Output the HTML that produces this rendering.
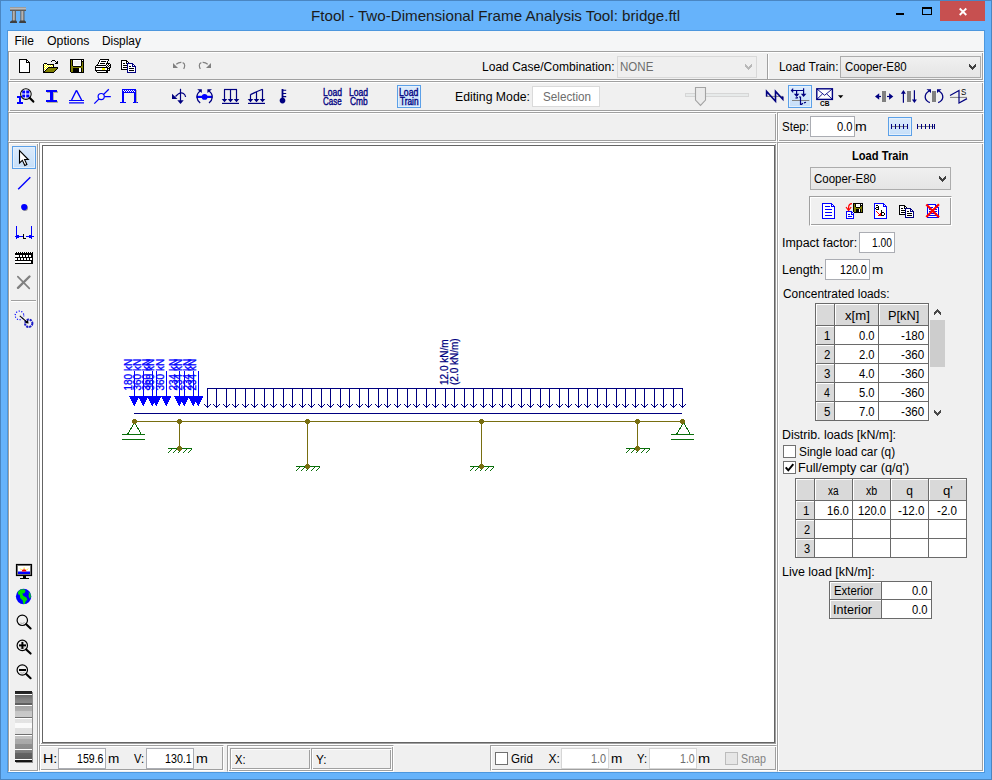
<!DOCTYPE html><html><head><meta charset="utf-8"><title>Ftool</title><style>
html,body{margin:0;padding:0}
body{width:992px;height:780px;overflow:hidden;position:relative;background:#66B3FB;font-family:"Liberation Sans",sans-serif;font-size:12px}
div,svg{position:absolute}
svg{overflow:visible}
.t{white-space:nowrap;line-height:1;padding-bottom:0;height:auto}
.px{shape-rendering:crispEdges}
</style></head><body>
<div style="left:0px;top:0px;width:992px;height:780px;background:#66B3FB;border:1px solid #4A86C2;box-sizing:border-box;"></div>
<div style="left:7px;top:30px;width:978px;height:743px;background:#4C97DE;"></div>
<div style="left:8px;top:31px;width:976px;height:741px;background:#F0F0F0;"></div>
<div style="left:940px;top:1px;width:45px;height:20px;background:#C75050;"></div>
<svg style="left:959px;top:8px" width="9" height="8" viewBox="0 0 9 8" ><path d="M0.7,0.5 L7.3,7 M7.3,0.5 L0.7,7" stroke="#fff" stroke-width="1.8" fill="none"/></svg>
<div style="left:896px;top:13px;width:8px;height:2px;background:#000;"></div>
<div style="left:922px;top:7px;width:10px;height:8px;border:1px solid #000;box-sizing:border-box;border-top-width:2px;"></div>
<div style="left:8px;top:31px;width:976px;height:20px;background:#F5F6F7;"></div>
<div style="left:8px;top:51px;width:976px;height:30px;box-sizing:border-box;border:1px solid;border-color:#A0A0A0 #FFFFFF #FFFFFF #A0A0A0;box-shadow:inset 1px 1px 0 #FFFFFF,inset -1px -1px 0 #A0A0A0;"></div>
<div style="left:8px;top:81px;width:976px;height:31px;box-sizing:border-box;border:1px solid;border-color:#A0A0A0 #FFFFFF #FFFFFF #A0A0A0;box-shadow:inset 1px 1px 0 #FFFFFF,inset -1px -1px 0 #A0A0A0;"></div>
<div style="left:8px;top:112px;width:769px;height:30px;box-sizing:border-box;border:1px solid;border-color:#A0A0A0 #FFFFFF #FFFFFF #A0A0A0;box-shadow:inset 1px 1px 0 #FFFFFF,inset -1px -1px 0 #A0A0A0;"></div>
<div style="left:777px;top:112px;width:207px;height:30px;box-sizing:border-box;border:1px solid;border-color:#A0A0A0 #FFFFFF #FFFFFF #A0A0A0;box-shadow:inset 1px 1px 0 #FFFFFF,inset -1px -1px 0 #A0A0A0;"></div>
<div style="left:8px;top:142px;width:31px;height:630px;box-sizing:border-box;border:1px solid;border-color:#A0A0A0 #FFFFFF #FFFFFF #A0A0A0;box-shadow:inset 1px 1px 0 #FFFFFF,inset -1px -1px 0 #A0A0A0;"></div>
<div style="left:39px;top:142px;width:738px;height:603px;box-sizing:border-box;border:1px solid;border-color:#A0A0A0 #FFFFFF #FFFFFF #A0A0A0;box-shadow:inset 1px 1px 0 #FFFFFF,inset -1px -1px 0 #A0A0A0;"></div>
<div style="left:41px;top:143px;width:734px;height:600px;background:#fff;"></div>
<div style="left:40px;top:143px;width:735px;height:600px;background:#fff;"></div>
<div style="left:42px;top:145px;width:733px;height:598px;background:#fff;border:1px solid #646464;box-sizing:border-box;"></div>
<div style="left:777px;top:142px;width:207px;height:630px;box-sizing:border-box;border:1px solid;border-color:#A0A0A0 #FFFFFF #FFFFFF #A0A0A0;box-shadow:inset 1px 1px 0 #FFFFFF,inset -1px -1px 0 #A0A0A0;"></div>
<div style="left:39px;top:745px;width:185px;height:26px;box-sizing:border-box;border:1px solid;border-color:#A0A0A0 #FFFFFF #FFFFFF #A0A0A0;box-shadow:inset 1px 1px 0 #FFFFFF,inset -1px -1px 0 #A0A0A0;"></div>
<div style="left:227px;top:745px;width:167px;height:27px;box-sizing:border-box;border:1px solid;border-color:#A0A0A0 #FFFFFF #FFFFFF #A0A0A0;box-shadow:inset 1px 1px 0 #FFFFFF,inset -1px -1px 0 #A0A0A0;"></div>
<div style="left:490px;top:745px;width:287px;height:26px;box-sizing:border-box;border:1px solid;border-color:#A0A0A0 #FFFFFF #FFFFFF #A0A0A0;box-shadow:inset 1px 1px 0 #FFFFFF,inset -1px -1px 0 #A0A0A0;"></div>
<div style="left:617px;top:56px;width:140px;height:22px;background:#EFEFEF;border:1px solid #D9D9D9;box-sizing:border-box;"></div>
<svg style="left:0px;top:0px" width="1" height="1" viewBox="0 0 1 1" class="px"><rect x="745" y="64" width="1" height="3" fill="#B8B8B8"/><rect x="746" y="65" width="1" height="3" fill="#B8B8B8"/><rect x="747" y="66" width="1" height="3" fill="#B8B8B8"/><rect x="748" y="67" width="1" height="3" fill="#B8B8B8"/><rect x="749" y="66" width="1" height="3" fill="#B8B8B8"/><rect x="750" y="65" width="1" height="3" fill="#B8B8B8"/><rect x="751" y="64" width="1" height="3" fill="#B8B8B8"/></svg>
<div style="left:840px;top:56px;width:141px;height:22px;border:1px solid #ACACAC;box-sizing:border-box;background:linear-gradient(#F0F0F0,#E5E5E5);"></div>
<svg style="left:0px;top:0px" width="1" height="1" viewBox="0 0 1 1" class="px"><rect x="969" y="64" width="1" height="3" fill="#404040"/><rect x="970" y="65" width="1" height="3" fill="#404040"/><rect x="971" y="66" width="1" height="3" fill="#404040"/><rect x="972" y="67" width="1" height="3" fill="#404040"/><rect x="973" y="66" width="1" height="3" fill="#404040"/><rect x="974" y="65" width="1" height="3" fill="#404040"/><rect x="975" y="64" width="1" height="3" fill="#404040"/></svg>
<div style="left:767px;top:54px;width:1px;height:25px;background:#A0A0A0;"></div>
<div style="left:768px;top:54px;width:1px;height:25px;background:#FFFFFF;"></div>
<div style="left:532px;top:86px;width:68px;height:21px;background:#fff;border:1px solid #DADADA;box-sizing:border-box;"></div>
<div style="left:685px;top:93px;width:64px;height:4px;background:#E7EAEA;border:1px solid #D6D6D6;box-sizing:border-box;"></div>
<svg style="left:695px;top:87px" width="12" height="20" viewBox="0 0 12 20" ><path d="M0.5,0.5 H10.5 V13 L5.5,18.4 L0.5,13 Z" fill="#EBEBEB" stroke="#A3A3A3" stroke-width="1.1"/></svg>
<div style="left:810px;top:116px;width:45px;height:21px;background:#fff;border:1px solid #ABADB3;box-sizing:border-box;"></div>
<div style="left:810px;top:167px;width:141px;height:23px;border:1px solid #ACACAC;box-sizing:border-box;background:linear-gradient(#F0F0F0,#E5E5E5);"></div>
<svg style="left:0px;top:0px" width="1" height="1" viewBox="0 0 1 1" class="px"><rect x="939" y="176" width="1" height="3" fill="#404040"/><rect x="940" y="177" width="1" height="3" fill="#404040"/><rect x="941" y="178" width="1" height="3" fill="#404040"/><rect x="942" y="179" width="1" height="3" fill="#404040"/><rect x="943" y="178" width="1" height="3" fill="#404040"/><rect x="944" y="177" width="1" height="3" fill="#404040"/><rect x="945" y="176" width="1" height="3" fill="#404040"/></svg>
<div style="left:809px;top:196px;width:143px;height:30px;box-sizing:border-box;border:1px solid;border-color:#A0A0A0 #FFFFFF #FFFFFF #A0A0A0;box-shadow:inset 1px 1px 0 #FFFFFF,inset -1px -1px 0 #A0A0A0;"></div>
<div style="left:859px;top:232px;width:36px;height:21px;background:#fff;border:1px solid #ABADB3;box-sizing:border-box;"></div>
<div style="left:825px;top:259px;width:45px;height:21px;background:#fff;border:1px solid #ABADB3;box-sizing:border-box;"></div>
<div style="left:815px;top:303px;width:114px;height:118px;background:#fff;"></div>
<div style="left:816px;top:304px;width:18px;height:21px;background:#D9D9D9;box-shadow:inset 1px 1px 0 #fff;"></div>
<div style="left:835px;top:304px;width:43px;height:21px;background:#D9D9D9;box-shadow:inset 1px 1px 0 #fff;"></div>
<div style="left:879px;top:304px;width:49px;height:21px;background:#D9D9D9;box-shadow:inset 1px 1px 0 #fff;"></div>
<div style="left:816px;top:326px;width:18px;height:18px;background:#D9D9D9;box-shadow:inset 1px 1px 0 #fff;"></div>
<div style="left:816px;top:345px;width:18px;height:18px;background:#D9D9D9;box-shadow:inset 1px 1px 0 #fff;"></div>
<div style="left:816px;top:364px;width:18px;height:18px;background:#D9D9D9;box-shadow:inset 1px 1px 0 #fff;"></div>
<div style="left:816px;top:383px;width:18px;height:18px;background:#D9D9D9;box-shadow:inset 1px 1px 0 #fff;"></div>
<div style="left:816px;top:402px;width:18px;height:18px;background:#D9D9D9;box-shadow:inset 1px 1px 0 #fff;"></div>
<div style="left:815px;top:303px;width:1px;height:118px;background:#6A6A6A;"></div>
<div style="left:834px;top:303px;width:1px;height:118px;background:#6A6A6A;"></div>
<div style="left:878px;top:303px;width:1px;height:118px;background:#6A6A6A;"></div>
<div style="left:928px;top:303px;width:1px;height:118px;background:#6A6A6A;"></div>
<div style="left:815px;top:303px;width:114px;height:1px;background:#6A6A6A;"></div>
<div style="left:815px;top:325px;width:114px;height:1px;background:#6A6A6A;"></div>
<div style="left:815px;top:344px;width:114px;height:1px;background:#6A6A6A;"></div>
<div style="left:815px;top:363px;width:114px;height:1px;background:#6A6A6A;"></div>
<div style="left:815px;top:382px;width:114px;height:1px;background:#6A6A6A;"></div>
<div style="left:815px;top:401px;width:114px;height:1px;background:#6A6A6A;"></div>
<div style="left:815px;top:420px;width:114px;height:1px;background:#6A6A6A;"></div>
<div style="left:795px;top:478px;width:172px;height:80px;background:#fff;"></div>
<div style="left:796px;top:479px;width:18px;height:21px;background:#D9D9D9;box-shadow:inset 1px 1px 0 #fff;"></div>
<div style="left:815px;top:479px;width:37px;height:21px;background:#D9D9D9;box-shadow:inset 1px 1px 0 #fff;"></div>
<div style="left:853px;top:479px;width:37px;height:21px;background:#D9D9D9;box-shadow:inset 1px 1px 0 #fff;"></div>
<div style="left:891px;top:479px;width:37px;height:21px;background:#D9D9D9;box-shadow:inset 1px 1px 0 #fff;"></div>
<div style="left:929px;top:479px;width:37px;height:21px;background:#D9D9D9;box-shadow:inset 1px 1px 0 #fff;"></div>
<div style="left:796px;top:501px;width:18px;height:18px;background:#D9D9D9;box-shadow:inset 1px 1px 0 #fff;"></div>
<div style="left:796px;top:520px;width:18px;height:18px;background:#D9D9D9;box-shadow:inset 1px 1px 0 #fff;"></div>
<div style="left:796px;top:539px;width:18px;height:18px;background:#D9D9D9;box-shadow:inset 1px 1px 0 #fff;"></div>
<div style="left:795px;top:478px;width:1px;height:80px;background:#6A6A6A;"></div>
<div style="left:814px;top:478px;width:1px;height:80px;background:#6A6A6A;"></div>
<div style="left:852px;top:478px;width:1px;height:80px;background:#6A6A6A;"></div>
<div style="left:890px;top:478px;width:1px;height:80px;background:#6A6A6A;"></div>
<div style="left:928px;top:478px;width:1px;height:80px;background:#6A6A6A;"></div>
<div style="left:966px;top:478px;width:1px;height:80px;background:#6A6A6A;"></div>
<div style="left:795px;top:478px;width:172px;height:1px;background:#6A6A6A;"></div>
<div style="left:795px;top:500px;width:172px;height:1px;background:#6A6A6A;"></div>
<div style="left:795px;top:519px;width:172px;height:1px;background:#6A6A6A;"></div>
<div style="left:795px;top:538px;width:172px;height:1px;background:#6A6A6A;"></div>
<div style="left:795px;top:557px;width:172px;height:1px;background:#6A6A6A;"></div>
<div style="left:829px;top:581px;width:103px;height:38px;background:#fff;"></div>
<div style="left:830px;top:582px;width:51px;height:17px;background:#D9D9D9;box-shadow:inset 1px 1px 0 #fff;"></div>
<div style="left:830px;top:600px;width:51px;height:18px;background:#D9D9D9;box-shadow:inset 1px 1px 0 #fff;"></div>
<div style="left:829px;top:581px;width:1px;height:38px;background:#6A6A6A;"></div>
<div style="left:881px;top:581px;width:1px;height:38px;background:#6A6A6A;"></div>
<div style="left:931px;top:581px;width:1px;height:38px;background:#6A6A6A;"></div>
<div style="left:829px;top:581px;width:103px;height:1px;background:#6A6A6A;"></div>
<div style="left:829px;top:599px;width:103px;height:1px;background:#6A6A6A;"></div>
<div style="left:829px;top:618px;width:103px;height:1px;background:#6A6A6A;"></div>
<div style="left:930px;top:320px;width:15px;height:47px;background:#CDCDCD;"></div>
<div style="left:929px;top:304px;width:1px;height:117px;background:#FAFAFA;"></div>
<svg style="left:0px;top:0px" width="1" height="1" viewBox="0 0 1 1" class="px"><rect x="934" y="312" width="1" height="3" fill="#484848"/><rect x="935" y="311" width="1" height="3" fill="#484848"/><rect x="936" y="310" width="1" height="3" fill="#484848"/><rect x="937" y="309" width="1" height="3" fill="#484848"/><rect x="938" y="310" width="1" height="3" fill="#484848"/><rect x="939" y="311" width="1" height="3" fill="#484848"/><rect x="940" y="312" width="1" height="3" fill="#484848"/></svg>
<svg style="left:0px;top:0px" width="1" height="1" viewBox="0 0 1 1" class="px"><rect x="934" y="410" width="1" height="3" fill="#484848"/><rect x="935" y="411" width="1" height="3" fill="#484848"/><rect x="936" y="412" width="1" height="3" fill="#484848"/><rect x="937" y="413" width="1" height="3" fill="#484848"/><rect x="938" y="412" width="1" height="3" fill="#484848"/><rect x="939" y="411" width="1" height="3" fill="#484848"/><rect x="940" y="410" width="1" height="3" fill="#484848"/></svg>
<div style="left:783px;top:445px;width:13px;height:13px;background:#fff;border:1px solid #707070;box-sizing:border-box;"></div>
<div style="left:783px;top:461px;width:13px;height:13px;background:#fff;border:1px solid #707070;box-sizing:border-box;"></div>
<svg style="left:783px;top:461px" width="13" height="13" viewBox="0 0 13 13" ><path d="M2.7,6.3 L5.3,9.3 L10.3,3.2" stroke="#000" stroke-width="2" fill="none"/></svg>
<div style="left:495px;top:752px;width:13px;height:13px;background:#fff;border:1px solid #707070;box-sizing:border-box;"></div>
<div style="left:725px;top:752px;width:13px;height:13px;background:#E6E6E6;border:1px solid #BCBCBC;box-sizing:border-box;"></div>
<div style="left:58px;top:748px;width:48px;height:21px;background:#fff;border:1px solid #ABADB3;box-sizing:border-box;"></div>
<div style="left:146px;top:748px;width:48px;height:21px;background:#fff;border:1px solid #ABADB3;box-sizing:border-box;"></div>
<div style="left:230px;top:748px;width:81px;height:22px;box-sizing:border-box;border:1px solid;border-color:#A0A0A0 #FFFFFF #FFFFFF #A0A0A0;box-shadow:inset 1px 1px 0 #FFFFFF,inset -1px -1px 0 #A0A0A0;"></div>
<div style="left:311px;top:748px;width:81px;height:22px;box-sizing:border-box;border:1px solid;border-color:#A0A0A0 #FFFFFF #FFFFFF #A0A0A0;box-shadow:inset 1px 1px 0 #FFFFFF,inset -1px -1px 0 #A0A0A0;"></div>
<div style="left:561px;top:748px;width:48px;height:21px;background:#fff;border:1px solid #D6D6D6;box-sizing:border-box;"></div>
<div style="left:649px;top:748px;width:48px;height:21px;background:#fff;border:1px solid #D6D6D6;box-sizing:border-box;"></div>
<svg style="left:0px;top:0px" width="992" height="780" viewBox="0 0 992 780" ><g shape-rendering="crispEdges"><rect x="134" y="413" width="548" height="1" fill="#000080"/><rect x="134" y="421" width="549" height="1" fill="#786E10"/><rect x="179" y="421" width="1" height="28" fill="#786E10"/><rect x="307" y="421" width="1" height="46" fill="#786E10"/><rect x="481" y="421" width="1" height="46" fill="#786E10"/><rect x="637" y="421" width="1" height="28" fill="#786E10"/><rect x="168" y="448" width="24" height="1" fill="#0A6E0A"/><rect x="171" y="449" width="1" height="1" fill="#0A6E0A"/><rect x="170" y="450" width="1" height="1" fill="#0A6E0A"/><rect x="169" y="451" width="1" height="1" fill="#0A6E0A"/><rect x="168" y="452" width="1" height="1" fill="#0A6E0A"/><rect x="176" y="449" width="1" height="1" fill="#0A6E0A"/><rect x="175" y="450" width="1" height="1" fill="#0A6E0A"/><rect x="174" y="451" width="1" height="1" fill="#0A6E0A"/><rect x="173" y="452" width="1" height="1" fill="#0A6E0A"/><rect x="181" y="449" width="1" height="1" fill="#0A6E0A"/><rect x="180" y="450" width="1" height="1" fill="#0A6E0A"/><rect x="179" y="451" width="1" height="1" fill="#0A6E0A"/><rect x="178" y="452" width="1" height="1" fill="#0A6E0A"/><rect x="186" y="449" width="1" height="1" fill="#0A6E0A"/><rect x="185" y="450" width="1" height="1" fill="#0A6E0A"/><rect x="184" y="451" width="1" height="1" fill="#0A6E0A"/><rect x="183" y="452" width="1" height="1" fill="#0A6E0A"/><rect x="191" y="449" width="1" height="1" fill="#0A6E0A"/><rect x="190" y="450" width="1" height="1" fill="#0A6E0A"/><rect x="189" y="451" width="1" height="1" fill="#0A6E0A"/><rect x="188" y="452" width="1" height="1" fill="#0A6E0A"/><rect x="296" y="466" width="24" height="1" fill="#0A6E0A"/><rect x="299" y="467" width="1" height="1" fill="#0A6E0A"/><rect x="298" y="468" width="1" height="1" fill="#0A6E0A"/><rect x="297" y="469" width="1" height="1" fill="#0A6E0A"/><rect x="296" y="470" width="1" height="1" fill="#0A6E0A"/><rect x="304" y="467" width="1" height="1" fill="#0A6E0A"/><rect x="303" y="468" width="1" height="1" fill="#0A6E0A"/><rect x="302" y="469" width="1" height="1" fill="#0A6E0A"/><rect x="301" y="470" width="1" height="1" fill="#0A6E0A"/><rect x="309" y="467" width="1" height="1" fill="#0A6E0A"/><rect x="308" y="468" width="1" height="1" fill="#0A6E0A"/><rect x="307" y="469" width="1" height="1" fill="#0A6E0A"/><rect x="306" y="470" width="1" height="1" fill="#0A6E0A"/><rect x="314" y="467" width="1" height="1" fill="#0A6E0A"/><rect x="313" y="468" width="1" height="1" fill="#0A6E0A"/><rect x="312" y="469" width="1" height="1" fill="#0A6E0A"/><rect x="311" y="470" width="1" height="1" fill="#0A6E0A"/><rect x="319" y="467" width="1" height="1" fill="#0A6E0A"/><rect x="318" y="468" width="1" height="1" fill="#0A6E0A"/><rect x="317" y="469" width="1" height="1" fill="#0A6E0A"/><rect x="316" y="470" width="1" height="1" fill="#0A6E0A"/><rect x="470" y="466" width="24" height="1" fill="#0A6E0A"/><rect x="473" y="467" width="1" height="1" fill="#0A6E0A"/><rect x="472" y="468" width="1" height="1" fill="#0A6E0A"/><rect x="471" y="469" width="1" height="1" fill="#0A6E0A"/><rect x="470" y="470" width="1" height="1" fill="#0A6E0A"/><rect x="478" y="467" width="1" height="1" fill="#0A6E0A"/><rect x="477" y="468" width="1" height="1" fill="#0A6E0A"/><rect x="476" y="469" width="1" height="1" fill="#0A6E0A"/><rect x="475" y="470" width="1" height="1" fill="#0A6E0A"/><rect x="483" y="467" width="1" height="1" fill="#0A6E0A"/><rect x="482" y="468" width="1" height="1" fill="#0A6E0A"/><rect x="481" y="469" width="1" height="1" fill="#0A6E0A"/><rect x="480" y="470" width="1" height="1" fill="#0A6E0A"/><rect x="488" y="467" width="1" height="1" fill="#0A6E0A"/><rect x="487" y="468" width="1" height="1" fill="#0A6E0A"/><rect x="486" y="469" width="1" height="1" fill="#0A6E0A"/><rect x="485" y="470" width="1" height="1" fill="#0A6E0A"/><rect x="493" y="467" width="1" height="1" fill="#0A6E0A"/><rect x="492" y="468" width="1" height="1" fill="#0A6E0A"/><rect x="491" y="469" width="1" height="1" fill="#0A6E0A"/><rect x="490" y="470" width="1" height="1" fill="#0A6E0A"/><rect x="626" y="448" width="24" height="1" fill="#0A6E0A"/><rect x="629" y="449" width="1" height="1" fill="#0A6E0A"/><rect x="628" y="450" width="1" height="1" fill="#0A6E0A"/><rect x="627" y="451" width="1" height="1" fill="#0A6E0A"/><rect x="626" y="452" width="1" height="1" fill="#0A6E0A"/><rect x="634" y="449" width="1" height="1" fill="#0A6E0A"/><rect x="633" y="450" width="1" height="1" fill="#0A6E0A"/><rect x="632" y="451" width="1" height="1" fill="#0A6E0A"/><rect x="631" y="452" width="1" height="1" fill="#0A6E0A"/><rect x="639" y="449" width="1" height="1" fill="#0A6E0A"/><rect x="638" y="450" width="1" height="1" fill="#0A6E0A"/><rect x="637" y="451" width="1" height="1" fill="#0A6E0A"/><rect x="636" y="452" width="1" height="1" fill="#0A6E0A"/><rect x="644" y="449" width="1" height="1" fill="#0A6E0A"/><rect x="643" y="450" width="1" height="1" fill="#0A6E0A"/><rect x="642" y="451" width="1" height="1" fill="#0A6E0A"/><rect x="641" y="452" width="1" height="1" fill="#0A6E0A"/><rect x="649" y="449" width="1" height="1" fill="#0A6E0A"/><rect x="648" y="450" width="1" height="1" fill="#0A6E0A"/><rect x="647" y="451" width="1" height="1" fill="#0A6E0A"/><rect x="646" y="452" width="1" height="1" fill="#0A6E0A"/><path d="M134.5,422.5 L127.5,434.5 M134.5,422.5 L141.5,434.5" stroke="#0A6E0A" stroke-width="1" fill="none"/><rect x="122" y="434" width="23" height="1" fill="#0A6E0A"/><rect x="122" y="439" width="23" height="1" fill="#0A6E0A"/><path d="M683.5,422.5 L676.5,434.5 M683.5,422.5 L690.5,434.5" stroke="#0A6E0A" stroke-width="1" fill="none"/><rect x="671" y="434" width="23" height="1" fill="#0A6E0A"/><rect x="671" y="439" width="23" height="1" fill="#0A6E0A"/><circle cx="134.5" cy="421.5" r="2.5" fill="#786E10"/><circle cx="682.5" cy="421.5" r="2.5" fill="#786E10"/><circle cx="179.5" cy="421.5" r="2.5" fill="#786E10"/><circle cx="307.5" cy="421.5" r="2.5" fill="#786E10"/><circle cx="481.5" cy="421.5" r="2.5" fill="#786E10"/><circle cx="637.5" cy="421.5" r="2.5" fill="#786E10"/><circle cx="179.5" cy="448.5" r="2.5" fill="#786E10"/><circle cx="307.5" cy="466.5" r="2.5" fill="#786E10"/><circle cx="481.5" cy="466.5" r="2.5" fill="#786E10"/><circle cx="637.5" cy="448.5" r="2.5" fill="#786E10"/><rect x="207" y="388" width="476" height="1" fill="#000080"/><rect x="207" y="388" width="1" height="20" fill="#000080"/><path d="M204.5,404.5 L207.5,407.5 L210.5,404.5" stroke="#000080" stroke-width="1" fill="none"/><rect x="216" y="388" width="1" height="20" fill="#000080"/><path d="M213.5,404.5 L216.5,407.5 L219.5,404.5" stroke="#000080" stroke-width="1" fill="none"/><rect x="226" y="388" width="1" height="20" fill="#000080"/><path d="M223.5,404.5 L226.5,407.5 L229.5,404.5" stroke="#000080" stroke-width="1" fill="none"/><rect x="235" y="388" width="1" height="20" fill="#000080"/><path d="M232.5,404.5 L235.5,407.5 L238.5,404.5" stroke="#000080" stroke-width="1" fill="none"/><rect x="245" y="388" width="1" height="20" fill="#000080"/><path d="M242.5,404.5 L245.5,407.5 L248.5,404.5" stroke="#000080" stroke-width="1" fill="none"/><rect x="254" y="388" width="1" height="20" fill="#000080"/><path d="M251.5,404.5 L254.5,407.5 L257.5,404.5" stroke="#000080" stroke-width="1" fill="none"/><rect x="264" y="388" width="1" height="20" fill="#000080"/><path d="M261.5,404.5 L264.5,407.5 L267.5,404.5" stroke="#000080" stroke-width="1" fill="none"/><rect x="273" y="388" width="1" height="20" fill="#000080"/><path d="M270.5,404.5 L273.5,407.5 L276.5,404.5" stroke="#000080" stroke-width="1" fill="none"/><rect x="283" y="388" width="1" height="20" fill="#000080"/><path d="M280.5,404.5 L283.5,407.5 L286.5,404.5" stroke="#000080" stroke-width="1" fill="none"/><rect x="292" y="388" width="1" height="20" fill="#000080"/><path d="M289.5,404.5 L292.5,407.5 L295.5,404.5" stroke="#000080" stroke-width="1" fill="none"/><rect x="302" y="388" width="1" height="20" fill="#000080"/><path d="M299.5,404.5 L302.5,407.5 L305.5,404.5" stroke="#000080" stroke-width="1" fill="none"/><rect x="311" y="388" width="1" height="20" fill="#000080"/><path d="M308.5,404.5 L311.5,407.5 L314.5,404.5" stroke="#000080" stroke-width="1" fill="none"/><rect x="321" y="388" width="1" height="20" fill="#000080"/><path d="M318.5,404.5 L321.5,407.5 L324.5,404.5" stroke="#000080" stroke-width="1" fill="none"/><rect x="330" y="388" width="1" height="20" fill="#000080"/><path d="M327.5,404.5 L330.5,407.5 L333.5,404.5" stroke="#000080" stroke-width="1" fill="none"/><rect x="340" y="388" width="1" height="20" fill="#000080"/><path d="M337.5,404.5 L340.5,407.5 L343.5,404.5" stroke="#000080" stroke-width="1" fill="none"/><rect x="349" y="388" width="1" height="20" fill="#000080"/><path d="M346.5,404.5 L349.5,407.5 L352.5,404.5" stroke="#000080" stroke-width="1" fill="none"/><rect x="359" y="388" width="1" height="20" fill="#000080"/><path d="M356.5,404.5 L359.5,407.5 L362.5,404.5" stroke="#000080" stroke-width="1" fill="none"/><rect x="368" y="388" width="1" height="20" fill="#000080"/><path d="M365.5,404.5 L368.5,407.5 L371.5,404.5" stroke="#000080" stroke-width="1" fill="none"/><rect x="378" y="388" width="1" height="20" fill="#000080"/><path d="M375.5,404.5 L378.5,407.5 L381.5,404.5" stroke="#000080" stroke-width="1" fill="none"/><rect x="387" y="388" width="1" height="20" fill="#000080"/><path d="M384.5,404.5 L387.5,407.5 L390.5,404.5" stroke="#000080" stroke-width="1" fill="none"/><rect x="397" y="388" width="1" height="20" fill="#000080"/><path d="M394.5,404.5 L397.5,407.5 L400.5,404.5" stroke="#000080" stroke-width="1" fill="none"/><rect x="407" y="388" width="1" height="20" fill="#000080"/><path d="M404.5,404.5 L407.5,407.5 L410.5,404.5" stroke="#000080" stroke-width="1" fill="none"/><rect x="416" y="388" width="1" height="20" fill="#000080"/><path d="M413.5,404.5 L416.5,407.5 L419.5,404.5" stroke="#000080" stroke-width="1" fill="none"/><rect x="426" y="388" width="1" height="20" fill="#000080"/><path d="M423.5,404.5 L426.5,407.5 L429.5,404.5" stroke="#000080" stroke-width="1" fill="none"/><rect x="435" y="388" width="1" height="20" fill="#000080"/><path d="M432.5,404.5 L435.5,407.5 L438.5,404.5" stroke="#000080" stroke-width="1" fill="none"/><rect x="445" y="388" width="1" height="20" fill="#000080"/><path d="M442.5,404.5 L445.5,407.5 L448.5,404.5" stroke="#000080" stroke-width="1" fill="none"/><rect x="454" y="388" width="1" height="20" fill="#000080"/><path d="M451.5,404.5 L454.5,407.5 L457.5,404.5" stroke="#000080" stroke-width="1" fill="none"/><rect x="464" y="388" width="1" height="20" fill="#000080"/><path d="M461.5,404.5 L464.5,407.5 L467.5,404.5" stroke="#000080" stroke-width="1" fill="none"/><rect x="473" y="388" width="1" height="20" fill="#000080"/><path d="M470.5,404.5 L473.5,407.5 L476.5,404.5" stroke="#000080" stroke-width="1" fill="none"/><rect x="483" y="388" width="1" height="20" fill="#000080"/><path d="M480.5,404.5 L483.5,407.5 L486.5,404.5" stroke="#000080" stroke-width="1" fill="none"/><rect x="492" y="388" width="1" height="20" fill="#000080"/><path d="M489.5,404.5 L492.5,407.5 L495.5,404.5" stroke="#000080" stroke-width="1" fill="none"/><rect x="502" y="388" width="1" height="20" fill="#000080"/><path d="M499.5,404.5 L502.5,407.5 L505.5,404.5" stroke="#000080" stroke-width="1" fill="none"/><rect x="511" y="388" width="1" height="20" fill="#000080"/><path d="M508.5,404.5 L511.5,407.5 L514.5,404.5" stroke="#000080" stroke-width="1" fill="none"/><rect x="521" y="388" width="1" height="20" fill="#000080"/><path d="M518.5,404.5 L521.5,407.5 L524.5,404.5" stroke="#000080" stroke-width="1" fill="none"/><rect x="530" y="388" width="1" height="20" fill="#000080"/><path d="M527.5,404.5 L530.5,407.5 L533.5,404.5" stroke="#000080" stroke-width="1" fill="none"/><rect x="540" y="388" width="1" height="20" fill="#000080"/><path d="M537.5,404.5 L540.5,407.5 L543.5,404.5" stroke="#000080" stroke-width="1" fill="none"/><rect x="549" y="388" width="1" height="20" fill="#000080"/><path d="M546.5,404.5 L549.5,407.5 L552.5,404.5" stroke="#000080" stroke-width="1" fill="none"/><rect x="559" y="388" width="1" height="20" fill="#000080"/><path d="M556.5,404.5 L559.5,407.5 L562.5,404.5" stroke="#000080" stroke-width="1" fill="none"/><rect x="568" y="388" width="1" height="20" fill="#000080"/><path d="M565.5,404.5 L568.5,407.5 L571.5,404.5" stroke="#000080" stroke-width="1" fill="none"/><rect x="578" y="388" width="1" height="20" fill="#000080"/><path d="M575.5,404.5 L578.5,407.5 L581.5,404.5" stroke="#000080" stroke-width="1" fill="none"/><rect x="587" y="388" width="1" height="20" fill="#000080"/><path d="M584.5,404.5 L587.5,407.5 L590.5,404.5" stroke="#000080" stroke-width="1" fill="none"/><rect x="597" y="388" width="1" height="20" fill="#000080"/><path d="M594.5,404.5 L597.5,407.5 L600.5,404.5" stroke="#000080" stroke-width="1" fill="none"/><rect x="606" y="388" width="1" height="20" fill="#000080"/><path d="M603.5,404.5 L606.5,407.5 L609.5,404.5" stroke="#000080" stroke-width="1" fill="none"/><rect x="616" y="388" width="1" height="20" fill="#000080"/><path d="M613.5,404.5 L616.5,407.5 L619.5,404.5" stroke="#000080" stroke-width="1" fill="none"/><rect x="625" y="388" width="1" height="20" fill="#000080"/><path d="M622.5,404.5 L625.5,407.5 L628.5,404.5" stroke="#000080" stroke-width="1" fill="none"/><rect x="635" y="388" width="1" height="20" fill="#000080"/><path d="M632.5,404.5 L635.5,407.5 L638.5,404.5" stroke="#000080" stroke-width="1" fill="none"/><rect x="644" y="388" width="1" height="20" fill="#000080"/><path d="M641.5,404.5 L644.5,407.5 L647.5,404.5" stroke="#000080" stroke-width="1" fill="none"/><rect x="654" y="388" width="1" height="20" fill="#000080"/><path d="M651.5,404.5 L654.5,407.5 L657.5,404.5" stroke="#000080" stroke-width="1" fill="none"/><rect x="663" y="388" width="1" height="20" fill="#000080"/><path d="M660.5,404.5 L663.5,407.5 L666.5,404.5" stroke="#000080" stroke-width="1" fill="none"/><rect x="673" y="388" width="1" height="20" fill="#000080"/><path d="M670.5,404.5 L673.5,407.5 L676.5,404.5" stroke="#000080" stroke-width="1" fill="none"/><rect x="682" y="388" width="1" height="20" fill="#000080"/><path d="M679.5,404.5 L682.5,407.5 L685.5,404.5" stroke="#000080" stroke-width="1" fill="none"/><rect x="134" y="371" width="1" height="30" fill="#0000FF"/><path d="M129,396 H139.4 L134.3,406 Z" fill="#0000FF"/><rect x="143" y="371" width="1" height="30" fill="#0000FF"/><path d="M138,396 H148.4 L143.3,406 Z" fill="#0000FF"/><rect x="152" y="371" width="1" height="30" fill="#0000FF"/><path d="M147,396 H157.4 L152.3,406 Z" fill="#0000FF"/><rect x="156" y="371" width="1" height="30" fill="#0000FF"/><path d="M151,396 H161.4 L156.3,406 Z" fill="#0000FF"/><rect x="166" y="371" width="1" height="30" fill="#0000FF"/><path d="M161,396 H171.4 L166.3,406 Z" fill="#0000FF"/><rect x="179" y="371" width="1" height="30" fill="#0000FF"/><path d="M174,396 H184.4 L179.3,406 Z" fill="#0000FF"/><rect x="184" y="371" width="1" height="30" fill="#0000FF"/><path d="M179,396 H189.4 L184.3,406 Z" fill="#0000FF"/><rect x="193" y="371" width="1" height="30" fill="#0000FF"/><path d="M188,396 H198.4 L193.3,406 Z" fill="#0000FF"/><rect x="198" y="371" width="1" height="30" fill="#0000FF"/><path d="M193,396 H203.4 L198.3,406 Z" fill="#0000FF"/></g><g font-family="Liberation Sans, sans-serif"><text transform="translate(131.5,390.5) rotate(-90)" font-size="10" fill="#0000FF" stroke="#0000FF" stroke-width="0.3">180 kN</text><text transform="translate(140.5,390.5) rotate(-90)" font-size="10" fill="#0000FF" stroke="#0000FF" stroke-width="0.3">360 kN</text><text transform="translate(149.5,390.5) rotate(-90)" font-size="10" fill="#0000FF" stroke="#0000FF" stroke-width="0.3">360 kN</text><text transform="translate(153.5,390.5) rotate(-90)" font-size="10" fill="#0000FF" stroke="#0000FF" stroke-width="0.3">360 kN</text><text transform="translate(163.5,390.5) rotate(-90)" font-size="10" fill="#0000FF" stroke="#0000FF" stroke-width="0.3">360 kN</text><text transform="translate(176.5,390.5) rotate(-90)" font-size="10" fill="#0000FF" stroke="#0000FF" stroke-width="0.3">234 kN</text><text transform="translate(181.5,390.5) rotate(-90)" font-size="10" fill="#0000FF" stroke="#0000FF" stroke-width="0.3">234 kN</text><text transform="translate(190.5,390.5) rotate(-90)" font-size="10" fill="#0000FF" stroke="#0000FF" stroke-width="0.3">234 kN</text><text transform="translate(195.5,390.5) rotate(-90)" font-size="10" fill="#0000FF" stroke="#0000FF" stroke-width="0.3">234 kN</text><text transform="translate(447.5,385) rotate(-90)" font-size="10" fill="#000080" stroke="#000080" stroke-width="0.25">12.0 kN/m</text><text transform="translate(457.5,385) rotate(-90)" font-size="10" fill="#000080" stroke="#000080" stroke-width="0.25">(2.0 kN/m)</text></g></svg>
<svg style="left:19px;top:59px" width="11" height="14" viewBox="0 0 11 14" class="px"><rect x="0" y="0" width="8" height="1" fill="#000000"/><rect x="0" y="1" width="1" height="1" fill="#000000"/><rect x="1" y="1" width="6" height="1" fill="#FFFFFF"/><rect x="7" y="1" width="2" height="1" fill="#000000"/><rect x="0" y="2" width="1" height="1" fill="#000000"/><rect x="1" y="2" width="6" height="1" fill="#FFFFFF"/><rect x="7" y="2" width="1" height="1" fill="#000000"/><rect x="8" y="2" width="1" height="1" fill="#FFFFFF"/><rect x="9" y="2" width="1" height="1" fill="#000000"/><rect x="0" y="3" width="1" height="1" fill="#000000"/><rect x="1" y="3" width="6" height="1" fill="#FFFFFF"/><rect x="7" y="3" width="4" height="1" fill="#000000"/><rect x="0" y="4" width="1" height="1" fill="#000000"/><rect x="1" y="4" width="9" height="1" fill="#FFFFFF"/><rect x="10" y="4" width="1" height="1" fill="#000000"/><rect x="0" y="5" width="1" height="1" fill="#000000"/><rect x="1" y="5" width="9" height="1" fill="#FFFFFF"/><rect x="10" y="5" width="1" height="1" fill="#000000"/><rect x="0" y="6" width="1" height="1" fill="#000000"/><rect x="1" y="6" width="9" height="1" fill="#FFFFFF"/><rect x="10" y="6" width="1" height="1" fill="#000000"/><rect x="0" y="7" width="1" height="1" fill="#000000"/><rect x="1" y="7" width="9" height="1" fill="#FFFFFF"/><rect x="10" y="7" width="1" height="1" fill="#000000"/><rect x="0" y="8" width="1" height="1" fill="#000000"/><rect x="1" y="8" width="9" height="1" fill="#FFFFFF"/><rect x="10" y="8" width="1" height="1" fill="#000000"/><rect x="0" y="9" width="1" height="1" fill="#000000"/><rect x="1" y="9" width="9" height="1" fill="#FFFFFF"/><rect x="10" y="9" width="1" height="1" fill="#000000"/><rect x="0" y="10" width="1" height="1" fill="#000000"/><rect x="1" y="10" width="9" height="1" fill="#FFFFFF"/><rect x="10" y="10" width="1" height="1" fill="#000000"/><rect x="0" y="11" width="1" height="1" fill="#000000"/><rect x="1" y="11" width="9" height="1" fill="#FFFFFF"/><rect x="10" y="11" width="1" height="1" fill="#000000"/><rect x="0" y="12" width="1" height="1" fill="#000000"/><rect x="1" y="12" width="9" height="1" fill="#FFFFFF"/><rect x="10" y="12" width="1" height="1" fill="#000000"/><rect x="0" y="13" width="11" height="1" fill="#000000"/></svg>
<svg style="left:43px;top:60px" width="15" height="13" viewBox="0 0 15 13" class="px"><rect x="9" y="0" width="3" height="1" fill="#000000"/><rect x="8" y="1" width="1" height="1" fill="#000000"/><rect x="12" y="1" width="1" height="1" fill="#000000"/><rect x="14" y="1" width="1" height="1" fill="#000000"/><rect x="13" y="2" width="2" height="1" fill="#000000"/><rect x="1" y="3" width="3" height="1" fill="#000000"/><rect x="12" y="3" width="3" height="1" fill="#000000"/><rect x="0" y="4" width="1" height="1" fill="#000000"/><rect x="1" y="4" width="1" height="1" fill="#FFFFFF"/><rect x="2" y="4" width="1" height="1" fill="#FFFF00"/><rect x="3" y="4" width="1" height="1" fill="#FFFFFF"/><rect x="4" y="4" width="7" height="1" fill="#000000"/><rect x="0" y="5" width="1" height="1" fill="#000000"/><rect x="1" y="5" width="1" height="1" fill="#FFFF00"/><rect x="2" y="5" width="1" height="1" fill="#FFFFFF"/><rect x="3" y="5" width="1" height="1" fill="#FFFF00"/><rect x="4" y="5" width="1" height="1" fill="#FFFFFF"/><rect x="5" y="5" width="1" height="1" fill="#FFFF00"/><rect x="6" y="5" width="1" height="1" fill="#FFFFFF"/><rect x="7" y="5" width="1" height="1" fill="#FFFF00"/><rect x="8" y="5" width="1" height="1" fill="#FFFFFF"/><rect x="9" y="5" width="1" height="1" fill="#FFFF00"/><rect x="10" y="5" width="1" height="1" fill="#000000"/><rect x="0" y="6" width="1" height="1" fill="#000000"/><rect x="1" y="6" width="1" height="1" fill="#FFFFFF"/><rect x="2" y="6" width="1" height="1" fill="#FFFF00"/><rect x="3" y="6" width="1" height="1" fill="#FFFFFF"/><rect x="4" y="6" width="1" height="1" fill="#FFFF00"/><rect x="5" y="6" width="1" height="1" fill="#FFFFFF"/><rect x="6" y="6" width="1" height="1" fill="#FFFF00"/><rect x="7" y="6" width="1" height="1" fill="#FFFFFF"/><rect x="8" y="6" width="1" height="1" fill="#FFFF00"/><rect x="9" y="6" width="1" height="1" fill="#FFFFFF"/><rect x="10" y="6" width="1" height="1" fill="#000000"/><rect x="0" y="7" width="1" height="1" fill="#000000"/><rect x="1" y="7" width="1" height="1" fill="#FFFF00"/><rect x="2" y="7" width="1" height="1" fill="#FFFFFF"/><rect x="3" y="7" width="1" height="1" fill="#FFFF00"/><rect x="4" y="7" width="1" height="1" fill="#FFFFFF"/><rect x="5" y="7" width="10" height="1" fill="#000000"/><rect x="0" y="8" width="1" height="1" fill="#000000"/><rect x="1" y="8" width="1" height="1" fill="#FFFFFF"/><rect x="2" y="8" width="1" height="1" fill="#FFFF00"/><rect x="3" y="8" width="1" height="1" fill="#FFFFFF"/><rect x="4" y="8" width="1" height="1" fill="#000000"/><rect x="5" y="8" width="9" height="1" fill="#808000"/><rect x="14" y="8" width="1" height="1" fill="#000000"/><rect x="0" y="9" width="1" height="1" fill="#000000"/><rect x="1" y="9" width="1" height="1" fill="#FFFF00"/><rect x="2" y="9" width="1" height="1" fill="#FFFFFF"/><rect x="3" y="9" width="1" height="1" fill="#000000"/><rect x="4" y="9" width="9" height="1" fill="#808000"/><rect x="13" y="9" width="1" height="1" fill="#000000"/><rect x="0" y="10" width="1" height="1" fill="#000000"/><rect x="1" y="10" width="1" height="1" fill="#FFFFFF"/><rect x="2" y="10" width="1" height="1" fill="#000000"/><rect x="3" y="10" width="9" height="1" fill="#808000"/><rect x="12" y="10" width="1" height="1" fill="#000000"/><rect x="0" y="11" width="2" height="1" fill="#000000"/><rect x="2" y="11" width="9" height="1" fill="#808000"/><rect x="11" y="11" width="1" height="1" fill="#000000"/><rect x="0" y="12" width="11" height="1" fill="#000000"/></svg>
<svg style="left:70px;top:59px" width="14" height="14" viewBox="0 0 14 14" class="px"><rect x="0" y="0" width="14" height="1" fill="#000000"/><rect x="0" y="1" width="1" height="1" fill="#000000"/><rect x="1" y="1" width="1" height="1" fill="#808000"/><rect x="2" y="1" width="1" height="1" fill="#000000"/><rect x="3" y="1" width="8" height="1" fill="#FFFFFF"/><rect x="11" y="1" width="1" height="1" fill="#000000"/><rect x="12" y="1" width="1" height="1" fill="#FFFFFF"/><rect x="13" y="1" width="1" height="1" fill="#000000"/><rect x="0" y="2" width="1" height="1" fill="#000000"/><rect x="1" y="2" width="1" height="1" fill="#808000"/><rect x="2" y="2" width="1" height="1" fill="#000000"/><rect x="3" y="2" width="1" height="1" fill="#FFFFFF"/><rect x="4" y="2" width="6" height="1" fill="#F0F0F0"/><rect x="10" y="2" width="1" height="1" fill="#FFFFFF"/><rect x="11" y="2" width="3" height="1" fill="#000000"/><rect x="0" y="3" width="1" height="1" fill="#000000"/><rect x="1" y="3" width="1" height="1" fill="#808000"/><rect x="2" y="3" width="1" height="1" fill="#000000"/><rect x="3" y="3" width="1" height="1" fill="#FFFFFF"/><rect x="4" y="3" width="6" height="1" fill="#F0F0F0"/><rect x="10" y="3" width="1" height="1" fill="#FFFFFF"/><rect x="11" y="3" width="1" height="1" fill="#000000"/><rect x="12" y="3" width="1" height="1" fill="#808000"/><rect x="13" y="3" width="1" height="1" fill="#000000"/><rect x="0" y="4" width="1" height="1" fill="#000000"/><rect x="1" y="4" width="1" height="1" fill="#808000"/><rect x="2" y="4" width="1" height="1" fill="#000000"/><rect x="3" y="4" width="1" height="1" fill="#FFFFFF"/><rect x="4" y="4" width="6" height="1" fill="#F0F0F0"/><rect x="10" y="4" width="1" height="1" fill="#FFFFFF"/><rect x="11" y="4" width="1" height="1" fill="#000000"/><rect x="12" y="4" width="1" height="1" fill="#808000"/><rect x="13" y="4" width="1" height="1" fill="#000000"/><rect x="0" y="5" width="1" height="1" fill="#000000"/><rect x="1" y="5" width="1" height="1" fill="#808000"/><rect x="2" y="5" width="1" height="1" fill="#000000"/><rect x="3" y="5" width="1" height="1" fill="#FFFFFF"/><rect x="4" y="5" width="6" height="1" fill="#F0F0F0"/><rect x="10" y="5" width="1" height="1" fill="#FFFFFF"/><rect x="11" y="5" width="1" height="1" fill="#000000"/><rect x="12" y="5" width="1" height="1" fill="#808000"/><rect x="13" y="5" width="1" height="1" fill="#000000"/><rect x="0" y="6" width="1" height="1" fill="#000000"/><rect x="1" y="6" width="1" height="1" fill="#808000"/><rect x="2" y="6" width="1" height="1" fill="#000000"/><rect x="3" y="6" width="8" height="1" fill="#FFFFFF"/><rect x="11" y="6" width="1" height="1" fill="#000000"/><rect x="12" y="6" width="1" height="1" fill="#808000"/><rect x="13" y="6" width="1" height="1" fill="#000000"/><rect x="0" y="7" width="1" height="1" fill="#000000"/><rect x="1" y="7" width="2" height="1" fill="#808000"/><rect x="3" y="7" width="8" height="1" fill="#000000"/><rect x="11" y="7" width="2" height="1" fill="#808000"/><rect x="13" y="7" width="1" height="1" fill="#000000"/><rect x="0" y="8" width="1" height="1" fill="#000000"/><rect x="1" y="8" width="12" height="1" fill="#808000"/><rect x="13" y="8" width="1" height="1" fill="#000000"/><rect x="0" y="9" width="1" height="1" fill="#000000"/><rect x="1" y="9" width="2" height="1" fill="#808000"/><rect x="3" y="9" width="6" height="1" fill="#000000"/><rect x="9" y="9" width="2" height="1" fill="#FFFFFF"/><rect x="11" y="9" width="1" height="1" fill="#000000"/><rect x="12" y="9" width="1" height="1" fill="#808000"/><rect x="13" y="9" width="1" height="1" fill="#000000"/><rect x="0" y="10" width="1" height="1" fill="#000000"/><rect x="1" y="10" width="2" height="1" fill="#808000"/><rect x="3" y="10" width="6" height="1" fill="#000000"/><rect x="9" y="10" width="2" height="1" fill="#FFFFFF"/><rect x="11" y="10" width="1" height="1" fill="#000000"/><rect x="12" y="10" width="1" height="1" fill="#808000"/><rect x="13" y="10" width="1" height="1" fill="#000000"/><rect x="0" y="11" width="1" height="1" fill="#000000"/><rect x="1" y="11" width="2" height="1" fill="#808000"/><rect x="3" y="11" width="6" height="1" fill="#000000"/><rect x="9" y="11" width="2" height="1" fill="#FFFFFF"/><rect x="11" y="11" width="1" height="1" fill="#000000"/><rect x="12" y="11" width="1" height="1" fill="#808000"/><rect x="13" y="11" width="1" height="1" fill="#000000"/><rect x="0" y="12" width="1" height="1" fill="#000000"/><rect x="1" y="12" width="2" height="1" fill="#808000"/><rect x="3" y="12" width="6" height="1" fill="#000000"/><rect x="9" y="12" width="2" height="1" fill="#FFFFFF"/><rect x="11" y="12" width="1" height="1" fill="#000000"/><rect x="12" y="12" width="1" height="1" fill="#808000"/><rect x="13" y="12" width="1" height="1" fill="#000000"/><rect x="1" y="13" width="13" height="1" fill="#000000"/></svg>
<svg style="left:95px;top:59px" width="16" height="14" viewBox="0 0 16 14" class="px"><rect x="5" y="0" width="9" height="1" fill="#000000"/><rect x="4" y="1" width="1" height="1" fill="#000000"/><rect x="5" y="1" width="8" height="1" fill="#FFFFFF"/><rect x="13" y="1" width="1" height="1" fill="#000000"/><rect x="4" y="2" width="1" height="1" fill="#000000"/><rect x="5" y="2" width="1" height="1" fill="#FFFFFF"/><rect x="6" y="2" width="5" height="1" fill="#000000"/><rect x="11" y="2" width="1" height="1" fill="#FFFFFF"/><rect x="12" y="2" width="1" height="1" fill="#000000"/><rect x="3" y="3" width="1" height="1" fill="#000000"/><rect x="4" y="3" width="8" height="1" fill="#FFFFFF"/><rect x="12" y="3" width="1" height="1" fill="#000000"/><rect x="3" y="4" width="1" height="1" fill="#000000"/><rect x="4" y="4" width="1" height="1" fill="#FFFFFF"/><rect x="5" y="4" width="5" height="1" fill="#000000"/><rect x="10" y="4" width="1" height="1" fill="#FFFFFF"/><rect x="11" y="4" width="4" height="1" fill="#000000"/><rect x="2" y="5" width="1" height="1" fill="#000000"/><rect x="3" y="5" width="8" height="1" fill="#FFFFFF"/><rect x="11" y="5" width="1" height="1" fill="#000000"/><rect x="12" y="5" width="1" height="1" fill="#FFFFFF"/><rect x="13" y="5" width="1" height="1" fill="#000000"/><rect x="14" y="5" width="1" height="1" fill="#FFFFFF"/><rect x="15" y="5" width="1" height="1" fill="#000000"/><rect x="1" y="6" width="10" height="1" fill="#000000"/><rect x="11" y="6" width="1" height="1" fill="#FFFFFF"/><rect x="12" y="6" width="1" height="1" fill="#000000"/><rect x="13" y="6" width="1" height="1" fill="#FFFFFF"/><rect x="14" y="6" width="1" height="1" fill="#000000"/><rect x="15" y="6" width="1" height="1" fill="#000000"/><rect x="0" y="7" width="1" height="1" fill="#000000"/><rect x="1" y="7" width="10" height="1" fill="#FFFFFF"/><rect x="11" y="7" width="1" height="1" fill="#000000"/><rect x="12" y="7" width="1" height="1" fill="#FFFFFF"/><rect x="13" y="7" width="1" height="1" fill="#000000"/><rect x="14" y="7" width="1" height="1" fill="#FFFFFF"/><rect x="15" y="7" width="1" height="1" fill="#000000"/><rect x="0" y="8" width="13" height="1" fill="#000000"/><rect x="13" y="8" width="1" height="1" fill="#FFFFFF"/><rect x="14" y="8" width="2" height="1" fill="#000000"/><rect x="0" y="9" width="1" height="1" fill="#000000"/><rect x="1" y="9" width="6" height="1" fill="#FFFFFF"/><rect x="7" y="9" width="3" height="1" fill="#FFFF00"/><rect x="10" y="9" width="2" height="1" fill="#FFFFFF"/><rect x="12" y="9" width="1" height="1" fill="#000000"/><rect x="13" y="9" width="1" height="1" fill="#000000"/><rect x="14" y="9" width="1" height="1" fill="#000000"/><rect x="0" y="10" width="1" height="1" fill="#000000"/><rect x="1" y="10" width="6" height="1" fill="#FFFFFF"/><rect x="7" y="10" width="3" height="1" fill="#FFFF00"/><rect x="10" y="10" width="2" height="1" fill="#FFFFFF"/><rect x="12" y="10" width="1" height="1" fill="#000000"/><rect x="13" y="10" width="1" height="1" fill="#FFFFFF"/><rect x="14" y="10" width="1" height="1" fill="#000000"/><rect x="0" y="11" width="13" height="1" fill="#000000"/><rect x="13" y="11" width="1" height="1" fill="#000000"/><rect x="14" y="11" width="1" height="1" fill="#000000"/><rect x="1" y="12" width="1" height="1" fill="#000000"/><rect x="2" y="12" width="9" height="1" fill="#FFFFFF"/><rect x="11" y="12" width="1" height="1" fill="#000000"/><rect x="12" y="12" width="1" height="1" fill="#000000"/><rect x="13" y="12" width="1" height="1" fill="#FFFFFF"/><rect x="2" y="13" width="11" height="1" fill="#000000"/></svg>
<svg style="left:121px;top:60px" width="15" height="13" viewBox="0 0 15 13" class="px"><rect x="0" y="0" width="6" height="1" fill="#000000"/><rect x="0" y="1" width="1" height="1" fill="#000000"/><rect x="1" y="1" width="4" height="1" fill="#FFFFFF"/><rect x="5" y="1" width="2" height="1" fill="#000000"/><rect x="0" y="2" width="1" height="1" fill="#000000"/><rect x="1" y="2" width="4" height="1" fill="#FFFFFF"/><rect x="5" y="2" width="1" height="1" fill="#000000"/><rect x="6" y="2" width="1" height="1" fill="#FFFFFF"/><rect x="7" y="2" width="1" height="1" fill="#000000"/><rect x="0" y="3" width="1" height="1" fill="#000000"/><rect x="1" y="3" width="1" height="1" fill="#FFFFFF"/><rect x="2" y="3" width="2" height="1" fill="#000000"/><rect x="4" y="3" width="1" height="1" fill="#FFFFFF"/><rect x="5" y="3" width="1" height="1" fill="#000000"/><rect x="6" y="3" width="6" height="1" fill="#000080"/><rect x="0" y="4" width="1" height="1" fill="#000000"/><rect x="1" y="4" width="5" height="1" fill="#FFFFFF"/><rect x="6" y="4" width="1" height="1" fill="#000080"/><rect x="7" y="4" width="4" height="1" fill="#FFFFFF"/><rect x="11" y="4" width="2" height="1" fill="#000080"/><rect x="0" y="5" width="1" height="1" fill="#000000"/><rect x="1" y="5" width="1" height="1" fill="#FFFFFF"/><rect x="2" y="5" width="4" height="1" fill="#000000"/><rect x="6" y="5" width="1" height="1" fill="#000080"/><rect x="7" y="5" width="4" height="1" fill="#FFFFFF"/><rect x="11" y="5" width="1" height="1" fill="#000080"/><rect x="12" y="5" width="1" height="1" fill="#FFFFFF"/><rect x="13" y="5" width="1" height="1" fill="#000080"/><rect x="0" y="6" width="1" height="1" fill="#000000"/><rect x="1" y="6" width="5" height="1" fill="#FFFFFF"/><rect x="6" y="6" width="1" height="1" fill="#000080"/><rect x="7" y="6" width="1" height="1" fill="#FFFFFF"/><rect x="8" y="6" width="2" height="1" fill="#000000"/><rect x="10" y="6" width="1" height="1" fill="#FFFFFF"/><rect x="11" y="6" width="4" height="1" fill="#000080"/><rect x="0" y="7" width="1" height="1" fill="#000000"/><rect x="1" y="7" width="1" height="1" fill="#FFFFFF"/><rect x="2" y="7" width="4" height="1" fill="#000000"/><rect x="6" y="7" width="1" height="1" fill="#000080"/><rect x="7" y="7" width="7" height="1" fill="#FFFFFF"/><rect x="14" y="7" width="1" height="1" fill="#000080"/><rect x="0" y="8" width="1" height="1" fill="#000000"/><rect x="1" y="8" width="5" height="1" fill="#FFFFFF"/><rect x="6" y="8" width="1" height="1" fill="#000080"/><rect x="7" y="8" width="1" height="1" fill="#FFFFFF"/><rect x="8" y="8" width="5" height="1" fill="#000000"/><rect x="13" y="8" width="1" height="1" fill="#FFFFFF"/><rect x="14" y="8" width="1" height="1" fill="#000080"/><rect x="0" y="9" width="6" height="1" fill="#000000"/><rect x="6" y="9" width="1" height="1" fill="#000080"/><rect x="7" y="9" width="7" height="1" fill="#FFFFFF"/><rect x="14" y="9" width="1" height="1" fill="#000080"/><rect x="6" y="10" width="1" height="1" fill="#000080"/><rect x="7" y="10" width="1" height="1" fill="#FFFFFF"/><rect x="8" y="10" width="5" height="1" fill="#000000"/><rect x="13" y="10" width="1" height="1" fill="#FFFFFF"/><rect x="14" y="10" width="1" height="1" fill="#000080"/><rect x="6" y="11" width="1" height="1" fill="#000080"/><rect x="7" y="11" width="7" height="1" fill="#FFFFFF"/><rect x="14" y="11" width="1" height="1" fill="#000080"/><rect x="6" y="12" width="9" height="1" fill="#000080"/></svg>
<svg style="left:0px;top:0px" width="992" height="780" viewBox="0 0 992 780" ><path d="M173,63 V68 H178 Z" fill="#808080"/><path d="M176.3,64.3 Q178.5,62.3 181,62.3 Q184.7,62.5 184.7,65.5 Q184.6,67.5 183.6,68.8" stroke="#808080" stroke-width="1.2" fill="none" stroke-dasharray="5.5,1.2,20"/><path d="M211,63 V68 H206 Z" fill="#808080"/><path d="M207.7,64.3 Q205.5,62.3 203,62.3 Q199.3,62.5 199.3,65.5 Q199.4,67.5 200.4,68.8" stroke="#808080" stroke-width="1.2" fill="none" stroke-dasharray="5.5,1.2,20"/></svg>
<svg style="left:0px;top:0px" width="992" height="780" viewBox="0 0 992 780" class="px"><rect x="17" y="96" width="4" height="2" fill="#0000FF"/><rect x="19" y="96" width="2" height="7" fill="#0000FF"/><rect x="17" y="102" width="6" height="2" fill="#0000FF"/></svg>
<svg style="left:0px;top:0px" width="992" height="780" viewBox="0 0 992 780" ><circle cx="25.9" cy="94.1" r="5.2" fill="#fff"/><path d="M22.2,90.6 h3 v3 h-3z M26.2,90.6 h3.2 v3 h-3.2z M22.2,94.6 h3 v3 h-3z M26.2,94.6 h3.2 v3 h-3.2z" fill="#0000FF"/><circle cx="25.9" cy="94.1" r="5.3" fill="none" stroke="#000" stroke-width="1.05"/><path d="M29.8,98 L33.3,101.6" stroke="#000" stroke-width="2.2" stroke-linecap="round"/></svg>
<svg style="left:0px;top:0px" width="992" height="780" viewBox="0 0 992 780" class="px"><path d="M47,91 h11 v2 h-4 v8 h4 v2 h-11 v-2 h4 v-8 h-4z" fill="#808060" opacity="0.55"/><path d="M46,90 h11 v2 h-4 v8 h4 v2 h-11 v-2 h4 v-8 h-4z" fill="#0000FF"/></svg>
<svg style="left:0px;top:0px" width="992" height="780" viewBox="0 0 992 780" ><path d="M76.5,90.3 L71.6,100 M76.5,90.3 L81.6,100" stroke="#0000FF" stroke-width="1.4" fill="none"/><path d="M69,100.5 H84 M69,102.8 H84" stroke="#0000FF" stroke-width="1.2" fill="none"/></svg>
<svg style="left:0px;top:0px" width="992" height="780" viewBox="0 0 992 780" ><path d="M94.3,103.6 L108.8,89.2 M104.5,96.6 H110.8" stroke="#0000FF" stroke-width="1.3" fill="none"/><circle cx="101.2" cy="96.6" r="3.1" fill="#F4F4F4" stroke="#0000FF" stroke-width="1.2"/></svg>
<svg style="left:0px;top:0px" width="992" height="780" viewBox="0 0 992 780" class="px"><rect x="122" y="89" width="14" height="4" fill="#0000FF"/><rect x="123" y="90" width="1" height="1" fill="#fff"/><rect x="124" y="91" width="1" height="1" fill="#fff"/><rect x="125" y="90" width="1" height="1" fill="#fff"/><rect x="126" y="91" width="1" height="1" fill="#fff"/><rect x="127" y="90" width="1" height="1" fill="#fff"/><rect x="128" y="91" width="1" height="1" fill="#fff"/><rect x="129" y="90" width="1" height="1" fill="#fff"/><rect x="130" y="91" width="1" height="1" fill="#fff"/><rect x="131" y="90" width="1" height="1" fill="#fff"/><rect x="132" y="91" width="1" height="1" fill="#fff"/><rect x="133" y="90" width="1" height="1" fill="#fff"/><rect x="134" y="91" width="1" height="1" fill="#fff"/><rect x="122" y="93" width="2" height="10" fill="#0000FF"/><rect x="134" y="93" width="2" height="10" fill="#0000FF"/><rect x="120" y="102" width="6" height="1" fill="#0000FF"/><rect x="133" y="102" width="5" height="1" fill="#0000FF"/><rect x="136" y="90" width="1" height="13" fill="#909070" opacity="0.6"/></svg>
<svg style="left:0px;top:0px" width="992" height="780" viewBox="0 0 992 780" ><path d="M180.5,88.8 V101" stroke="#000080" stroke-width="1.2" fill="none"/><path d="M177.3,100.3 H183.7 L180.5,104 Z" fill="#000080"/><path d="M172,93.8 V99 H177.5 Z" fill="#000080"/><path d="M175.5,96.5 Q180,91.5 183.5,93.5 Q185.3,94.8 185.6,97" stroke="#000080" stroke-width="1.2" fill="none"/></svg>
<svg style="left:0px;top:0px" width="992" height="780" viewBox="0 0 992 780" ><rect x="196.6" y="95.8" width="15.6" height="2.2" fill="#0000FF"/><circle cx="204.6" cy="96.9" r="2.9" fill="#0000FF"/><path d="M200.3,91 Q196.6,93.5 197,97.5 Q197.3,101 200.2,103" stroke="#000080" stroke-width="1.3" fill="none"/><path d="M208.9,91 Q212.6,93.5 212.2,97.5 Q211.9,101 209,103" stroke="#000080" stroke-width="1.3" fill="none"/><path d="M197.2,89.2 H201.8 V93 Z M212,89.2 H207.4 V93 Z" fill="#000080"/></svg>
<svg style="left:0px;top:0px" width="992" height="780" viewBox="0 0 992 780" ><path d="M224,89.5 H237" stroke="#000080" stroke-width="1.2"/><path d="M224.5,89.6 V101.3" stroke="#000080" stroke-width="1.2" fill="none"/><path d="M221.7,99.1 H227.3 L224.5,102.3 Z" fill="#000080"/><path d="M230.5,89.6 V101.3" stroke="#000080" stroke-width="1.2" fill="none"/><path d="M227.7,99.1 H233.3 L230.5,102.3 Z" fill="#000080"/><path d="M236.5,89.6 V101.3" stroke="#000080" stroke-width="1.2" fill="none"/><path d="M233.7,99.1 H239.3 L236.5,102.3 Z" fill="#000080"/><path d="M222,103.4 H239" stroke="#000080" stroke-width="1.2"/></svg>
<svg style="left:0px;top:0px" width="992" height="780" viewBox="0 0 992 780" ><path d="M250.5,94.6 L256.5,91.8 L262.5,89.3" stroke="#000080" stroke-width="1.2" fill="none"/><path d="M250.5,94.4 V101.3" stroke="#000080" stroke-width="1.2" fill="none"/><path d="M247.7,99.1 H253.3 L250.5,102.3 Z" fill="#000080"/><path d="M256.5,91.8 V101.3" stroke="#000080" stroke-width="1.2" fill="none"/><path d="M253.7,99.1 H259.3 L256.5,102.3 Z" fill="#000080"/><path d="M262.5,89.2 V101.3" stroke="#000080" stroke-width="1.2" fill="none"/><path d="M259.7,99.1 H265.3 L262.5,102.3 Z" fill="#000080"/><path d="M248,103.4 H265" stroke="#000080" stroke-width="1.2"/></svg>
<svg style="left:0px;top:0px" width="992" height="780" viewBox="0 0 992 780" ><rect x="281.6" y="89" width="1.8" height="10" fill="#000080"/><path d="M282,90.3 H286.2 M282,93.5 H286.2 M282,96.6 H286.2" stroke="#000080" stroke-width="1.1"/><circle cx="282.5" cy="100.6" r="2.8" fill="#000080"/></svg>
<div style="left:397px;top:85px;width:24px;height:23px;border:1px solid #5BA0E8;box-sizing:border-box;background:linear-gradient(#DCEBFC,#C6DFF9);box-shadow:inset 0 0 0 1px #E4F0FC;"></div>
<svg style="left:0px;top:0px" width="992" height="780" viewBox="0 0 992 780" ><path d="M766,96.4 H783" stroke="#808080" stroke-width="1"/><path d="M766.6,96.6 V91.4 L775.5,101.2 V91.4 L782.8,99.3 V96.4" stroke="#000080" stroke-width="1.6" fill="none" stroke-linejoin="miter"/></svg>
<div style="left:788px;top:85px;width:24px;height:23px;border:1px solid #5BA0E8;box-sizing:border-box;background:linear-gradient(#DCEBFC,#C6DFF9);box-shadow:inset 0 0 0 1px #E4F0FC;"></div>
<svg style="left:0px;top:0px" width="992" height="780" viewBox="0 0 992 780" ><path d="M791.8,90.5 H804 M793.2,88.6 L791.5,90.5 L793.2,92.4" stroke="#000080" stroke-width="1.2" fill="none"/><path d="M796.6,90.5 V96" stroke="#000080" stroke-width="1.2" fill="none"/><path d="M793.8000000000001,93.8 H799.4 L796.6,97 Z" fill="#000080"/><path d="M803.6,88.3 V96" stroke="#000080" stroke-width="1.2" fill="none"/><path d="M800.8000000000001,93.8 H806.4 L803.6,97 Z" fill="#000080"/><path d="M792,100.5 H809.3" stroke="#808080" stroke-width="1"/><path d="M795.5,98.2 L798,97.6 M799,97 H800.5 V104.3 H801.5 L803,103.3 M804,102.9 L806,102.3" stroke="#000080" stroke-width="1.2" fill="none"/></svg>
<svg style="left:0px;top:0px" width="992" height="780" viewBox="0 0 992 780" ><rect x="816.8" y="88.8" width="15.6" height="10.6" fill="#fff" stroke="#000080" stroke-width="1.4"/><path d="M817,89 L824.6,95.3 L832.2,89 M817,99.2 L822.6,93.8 M832.2,99.2 L826.6,93.8" stroke="#000080" stroke-width="0.9" fill="none"/><path d="M838,95.3 H843.3 L840.65,98.3 Z" fill="#000"/></svg>
<svg style="left:0px;top:0px" width="992" height="780" viewBox="0 0 992 780" ><rect x="882" y="91" width="4" height="11" fill="#808080"/><path d="M875,96.5 L879.2,93.3 V99.7 Z" fill="#000080"/><path d="M878,96.5 H881" stroke="#000080" stroke-width="1.2"/><path d="M893.3,96.5 L889.0999999999999,93.3 V99.7 Z" fill="#000080"/><path d="M890.3,96.5 H887" stroke="#000080" stroke-width="1.2"/></svg>
<svg style="left:0px;top:0px" width="992" height="780" viewBox="0 0 992 780" ><rect x="907" y="91" width="4" height="11" fill="#808080"/><path d="M903.4,92 V102.8" stroke="#000080" stroke-width="1.2"/><path d="M900.9,93.7 H905.9 L903.4,90.1 Z" fill="#000080"/><path d="M914.4,90.3 V101" stroke="#000080" stroke-width="1.2"/><path d="M911.9,99.4 H916.9 L914.4,103 Z" fill="#000080"/></svg>
<svg style="left:0px;top:0px" width="992" height="780" viewBox="0 0 992 780" ><rect x="932" y="91" width="4" height="11" fill="#808080"/><path d="M929,91 Q925,93.5 925.2,97.3 Q925.5,101 929.8,102.6" stroke="#000080" stroke-width="1.3" fill="none"/><path d="M939,91 Q943,93.5 942.8,97.3 Q942.5,101 938.2,102.6" stroke="#000080" stroke-width="1.3" fill="none"/><path d="M926.5,89.2 H931 V93 Z M941.5,89.2 H937 V93 Z" fill="#000080"/></svg>
<svg style="left:0px;top:0px" width="992" height="780" viewBox="0 0 992 780" ><path d="M950,97.4 H967" stroke="#808080" stroke-width="1"/><path d="M950,95.4 L959,90.4 V103 L967,98.6" stroke="#000080" stroke-width="1.2" fill="none"/></svg>
<div style="left:888px;top:117px;width:24px;height:19px;border:1px solid #5BA0E8;box-sizing:border-box;background:linear-gradient(#DCEBFC,#C6DFF9);box-shadow:inset 0 0 0 1px #E4F0FC;"></div>
<svg style="left:0px;top:0px" width="992" height="780" viewBox="0 0 992 780" class="px"><rect x="891" y="126" width="17" height="1" fill="#808080"/><rect x="891" y="124" width="1" height="5" fill="#000080"/><rect x="895" y="124" width="1" height="5" fill="#000080"/><rect x="899" y="124" width="1" height="5" fill="#000080"/><rect x="903" y="124" width="1" height="5" fill="#000080"/><rect x="907" y="124" width="1" height="5" fill="#000080"/><rect x="917" y="126" width="18" height="1" fill="#808080"/><rect x="917" y="124" width="1" height="5" fill="#000080"/><rect x="921" y="124" width="1" height="5" fill="#000080"/><rect x="925" y="124" width="1" height="5" fill="#000080"/><rect x="929" y="124" width="1" height="5" fill="#000080"/><rect x="932" y="124" width="1" height="5" fill="#000080"/><rect x="934" y="124" width="1" height="5" fill="#000080"/></svg>
<svg style="left:822px;top:203px" width="13" height="16" viewBox="0 0 13 16" class="px"><rect x="0" y="0" width="10" height="1" fill="#0000FF"/><rect x="0" y="1" width="1" height="1" fill="#0000FF"/><rect x="1" y="1" width="8" height="1" fill="#FFFFFF"/><rect x="9" y="1" width="2" height="1" fill="#0000FF"/><rect x="0" y="2" width="1" height="1" fill="#0000FF"/><rect x="1" y="2" width="8" height="1" fill="#FFFFFF"/><rect x="9" y="2" width="1" height="1" fill="#0000FF"/><rect x="10" y="2" width="1" height="1" fill="#FFFFFF"/><rect x="11" y="2" width="1" height="1" fill="#0000FF"/><rect x="0" y="3" width="1" height="1" fill="#0000FF"/><rect x="1" y="3" width="2" height="1" fill="#FFFFFF"/><rect x="3" y="3" width="5" height="1" fill="#0000FF"/><rect x="8" y="3" width="1" height="1" fill="#FFFFFF"/><rect x="9" y="3" width="4" height="1" fill="#0000FF"/><rect x="0" y="4" width="1" height="1" fill="#0000FF"/><rect x="1" y="4" width="11" height="1" fill="#FFFFFF"/><rect x="12" y="4" width="1" height="1" fill="#0000FF"/><rect x="0" y="5" width="1" height="1" fill="#0000FF"/><rect x="1" y="5" width="11" height="1" fill="#FFFFFF"/><rect x="12" y="5" width="1" height="1" fill="#0000FF"/><rect x="0" y="6" width="1" height="1" fill="#0000FF"/><rect x="1" y="6" width="2" height="1" fill="#FFFFFF"/><rect x="3" y="6" width="7" height="1" fill="#0000FF"/><rect x="10" y="6" width="2" height="1" fill="#FFFFFF"/><rect x="12" y="6" width="1" height="1" fill="#0000FF"/><rect x="0" y="7" width="1" height="1" fill="#0000FF"/><rect x="1" y="7" width="11" height="1" fill="#FFFFFF"/><rect x="12" y="7" width="1" height="1" fill="#0000FF"/><rect x="0" y="8" width="1" height="1" fill="#0000FF"/><rect x="1" y="8" width="11" height="1" fill="#FFFFFF"/><rect x="12" y="8" width="1" height="1" fill="#0000FF"/><rect x="0" y="9" width="1" height="1" fill="#0000FF"/><rect x="1" y="9" width="2" height="1" fill="#FFFFFF"/><rect x="3" y="9" width="7" height="1" fill="#0000FF"/><rect x="10" y="9" width="2" height="1" fill="#FFFFFF"/><rect x="12" y="9" width="1" height="1" fill="#0000FF"/><rect x="0" y="10" width="1" height="1" fill="#0000FF"/><rect x="1" y="10" width="11" height="1" fill="#FFFFFF"/><rect x="12" y="10" width="1" height="1" fill="#0000FF"/><rect x="0" y="11" width="1" height="1" fill="#0000FF"/><rect x="1" y="11" width="11" height="1" fill="#FFFFFF"/><rect x="12" y="11" width="1" height="1" fill="#0000FF"/><rect x="0" y="12" width="1" height="1" fill="#0000FF"/><rect x="1" y="12" width="2" height="1" fill="#FFFFFF"/><rect x="3" y="12" width="7" height="1" fill="#0000FF"/><rect x="10" y="12" width="2" height="1" fill="#FFFFFF"/><rect x="12" y="12" width="1" height="1" fill="#0000FF"/><rect x="0" y="13" width="1" height="1" fill="#0000FF"/><rect x="1" y="13" width="11" height="1" fill="#FFFFFF"/><rect x="12" y="13" width="1" height="1" fill="#0000FF"/><rect x="0" y="14" width="1" height="1" fill="#0000FF"/><rect x="1" y="14" width="11" height="1" fill="#FFFFFF"/><rect x="12" y="14" width="1" height="1" fill="#0000FF"/><rect x="0" y="15" width="13" height="1" fill="#0000FF"/></svg>
<svg style="left:846px;top:211px" width="8" height="8" viewBox="0 0 8 8" class="px"><rect x="0" y="0" width="6" height="1" fill="#0000FF"/><rect x="0" y="1" width="1" height="1" fill="#0000FF"/><rect x="1" y="1" width="4" height="1" fill="#FFFFFF"/><rect x="5" y="1" width="2" height="1" fill="#0000FF"/><rect x="0" y="2" width="1" height="1" fill="#0000FF"/><rect x="1" y="2" width="4" height="1" fill="#FFFFFF"/><rect x="5" y="2" width="1" height="1" fill="#0000FF"/><rect x="6" y="2" width="1" height="1" fill="#FFFFFF"/><rect x="7" y="2" width="1" height="1" fill="#0000FF"/><rect x="0" y="3" width="1" height="1" fill="#0000FF"/><rect x="1" y="3" width="1" height="1" fill="#FFFFFF"/><rect x="2" y="3" width="2" height="1" fill="#0000FF"/><rect x="4" y="3" width="1" height="1" fill="#FFFFFF"/><rect x="5" y="3" width="3" height="1" fill="#0000FF"/><rect x="0" y="4" width="1" height="1" fill="#0000FF"/><rect x="1" y="4" width="6" height="1" fill="#FFFFFF"/><rect x="7" y="4" width="1" height="1" fill="#0000FF"/><rect x="0" y="5" width="1" height="1" fill="#0000FF"/><rect x="1" y="5" width="1" height="1" fill="#FFFFFF"/><rect x="2" y="5" width="4" height="1" fill="#0000FF"/><rect x="6" y="5" width="1" height="1" fill="#FFFFFF"/><rect x="7" y="5" width="1" height="1" fill="#0000FF"/><rect x="0" y="6" width="1" height="1" fill="#0000FF"/><rect x="1" y="6" width="6" height="1" fill="#FFFFFF"/><rect x="7" y="6" width="1" height="1" fill="#0000FF"/><rect x="0" y="7" width="8" height="1" fill="#0000FF"/></svg>
<svg style="left:0px;top:0px" width="992" height="780" viewBox="0 0 992 780" ><path d="M852,203.6 Q848.6,203.8 848.6,207.5 V209.5" stroke="#FF0000" stroke-width="1.2" fill="none"/><path d="M846,207 L848.6,210.4 L851.2,207" stroke="#FF0000" stroke-width="1.2" fill="none"/></svg>
<svg style="left:853px;top:203px" width="10" height="10" viewBox="0 0 10 10" class="px"><rect x="0" y="0" width="10" height="1" fill="#000000"/><rect x="0" y="1" width="1" height="1" fill="#000000"/><rect x="1" y="1" width="1" height="1" fill="#808000"/><rect x="2" y="1" width="1" height="1" fill="#000000"/><rect x="3" y="1" width="4" height="1" fill="#FFFFFF"/><rect x="7" y="1" width="1" height="1" fill="#000000"/><rect x="8" y="1" width="1" height="1" fill="#FFFFFF"/><rect x="9" y="1" width="1" height="1" fill="#000000"/><rect x="0" y="2" width="1" height="1" fill="#000000"/><rect x="1" y="2" width="1" height="1" fill="#808000"/><rect x="2" y="2" width="1" height="1" fill="#000000"/><rect x="3" y="2" width="1" height="1" fill="#FFFFFF"/><rect x="4" y="2" width="2" height="1" fill="#F0F0F0"/><rect x="6" y="2" width="1" height="1" fill="#FFFFFF"/><rect x="7" y="2" width="3" height="1" fill="#000000"/><rect x="0" y="3" width="1" height="1" fill="#000000"/><rect x="1" y="3" width="1" height="1" fill="#808000"/><rect x="2" y="3" width="1" height="1" fill="#000000"/><rect x="3" y="3" width="4" height="1" fill="#FFFFFF"/><rect x="7" y="3" width="1" height="1" fill="#000000"/><rect x="8" y="3" width="1" height="1" fill="#808000"/><rect x="9" y="3" width="1" height="1" fill="#000000"/><rect x="0" y="4" width="1" height="1" fill="#000000"/><rect x="1" y="4" width="2" height="1" fill="#808000"/><rect x="3" y="4" width="4" height="1" fill="#000000"/><rect x="7" y="4" width="2" height="1" fill="#808000"/><rect x="9" y="4" width="1" height="1" fill="#000000"/><rect x="0" y="5" width="1" height="1" fill="#000000"/><rect x="1" y="5" width="8" height="1" fill="#808000"/><rect x="9" y="5" width="1" height="1" fill="#000000"/><rect x="0" y="6" width="1" height="1" fill="#000000"/><rect x="1" y="6" width="2" height="1" fill="#808000"/><rect x="3" y="6" width="3" height="1" fill="#000000"/><rect x="6" y="6" width="1" height="1" fill="#FFFFFF"/><rect x="7" y="6" width="1" height="1" fill="#000000"/><rect x="8" y="6" width="1" height="1" fill="#808000"/><rect x="9" y="6" width="1" height="1" fill="#000000"/><rect x="0" y="7" width="1" height="1" fill="#000000"/><rect x="1" y="7" width="2" height="1" fill="#808000"/><rect x="3" y="7" width="3" height="1" fill="#000000"/><rect x="6" y="7" width="1" height="1" fill="#FFFFFF"/><rect x="7" y="7" width="1" height="1" fill="#000000"/><rect x="8" y="7" width="1" height="1" fill="#808000"/><rect x="9" y="7" width="1" height="1" fill="#000000"/><rect x="0" y="8" width="1" height="1" fill="#000000"/><rect x="1" y="8" width="2" height="1" fill="#808000"/><rect x="3" y="8" width="3" height="1" fill="#000000"/><rect x="6" y="8" width="1" height="1" fill="#FFFFFF"/><rect x="7" y="8" width="1" height="1" fill="#000000"/><rect x="8" y="8" width="1" height="1" fill="#808000"/><rect x="9" y="8" width="1" height="1" fill="#000000"/><rect x="1" y="9" width="9" height="1" fill="#000000"/></svg>
<svg style="left:874px;top:203px" width="13" height="16" viewBox="0 0 13 16" class="px"><rect x="0" y="0" width="10" height="1" fill="#0000FF"/><rect x="0" y="1" width="1" height="1" fill="#0000FF"/><rect x="1" y="1" width="8" height="1" fill="#FFFFFF"/><rect x="9" y="1" width="2" height="1" fill="#0000FF"/><rect x="0" y="2" width="1" height="1" fill="#0000FF"/><rect x="1" y="2" width="1" height="1" fill="#FFFFFF"/><rect x="2" y="2" width="2" height="1" fill="#000000"/><rect x="4" y="2" width="5" height="1" fill="#FFFFFF"/><rect x="9" y="2" width="1" height="1" fill="#0000FF"/><rect x="10" y="2" width="1" height="1" fill="#FFFFFF"/><rect x="11" y="2" width="1" height="1" fill="#0000FF"/><rect x="0" y="3" width="1" height="1" fill="#0000FF"/><rect x="1" y="3" width="3" height="1" fill="#FFFFFF"/><rect x="4" y="3" width="1" height="1" fill="#000000"/><rect x="5" y="3" width="4" height="1" fill="#FFFFFF"/><rect x="9" y="3" width="4" height="1" fill="#0000FF"/><rect x="0" y="4" width="1" height="1" fill="#0000FF"/><rect x="1" y="4" width="1" height="1" fill="#FFFFFF"/><rect x="2" y="4" width="3" height="1" fill="#000000"/><rect x="5" y="4" width="7" height="1" fill="#FFFFFF"/><rect x="12" y="4" width="1" height="1" fill="#0000FF"/><rect x="0" y="5" width="1" height="1" fill="#0000FF"/><rect x="1" y="5" width="1" height="1" fill="#000000"/><rect x="2" y="5" width="2" height="1" fill="#FFFFFF"/><rect x="4" y="5" width="1" height="1" fill="#000000"/><rect x="5" y="5" width="7" height="1" fill="#FFFFFF"/><rect x="12" y="5" width="1" height="1" fill="#0000FF"/><rect x="0" y="6" width="1" height="1" fill="#0000FF"/><rect x="1" y="6" width="1" height="1" fill="#FFFFFF"/><rect x="2" y="6" width="3" height="1" fill="#000000"/><rect x="5" y="6" width="7" height="1" fill="#FFFFFF"/><rect x="12" y="6" width="1" height="1" fill="#0000FF"/><rect x="0" y="7" width="1" height="1" fill="#0000FF"/><rect x="1" y="7" width="6" height="1" fill="#FFFFFF"/><rect x="7" y="7" width="1" height="1" fill="#000000"/><rect x="8" y="7" width="4" height="1" fill="#FFFFFF"/><rect x="12" y="7" width="1" height="1" fill="#0000FF"/><rect x="0" y="8" width="1" height="1" fill="#0000FF"/><rect x="1" y="8" width="1" height="1" fill="#FFFFFF"/><rect x="2" y="8" width="1" height="1" fill="#FF0000"/><rect x="3" y="8" width="4" height="1" fill="#FFFFFF"/><rect x="7" y="8" width="1" height="1" fill="#000000"/><rect x="8" y="8" width="4" height="1" fill="#FFFFFF"/><rect x="12" y="8" width="1" height="1" fill="#0000FF"/><rect x="0" y="9" width="1" height="1" fill="#0000FF"/><rect x="1" y="9" width="2" height="1" fill="#FFFFFF"/><rect x="3" y="9" width="1" height="1" fill="#FF0000"/><rect x="4" y="9" width="3" height="1" fill="#FFFFFF"/><rect x="7" y="9" width="3" height="1" fill="#000000"/><rect x="10" y="9" width="2" height="1" fill="#FFFFFF"/><rect x="12" y="9" width="1" height="1" fill="#0000FF"/><rect x="0" y="10" width="1" height="1" fill="#0000FF"/><rect x="1" y="10" width="3" height="1" fill="#FFFFFF"/><rect x="4" y="10" width="1" height="1" fill="#FF0000"/><rect x="5" y="10" width="1" height="1" fill="#FFFFFF"/><rect x="6" y="10" width="1" height="1" fill="#FF0000"/><rect x="7" y="10" width="1" height="1" fill="#000000"/><rect x="8" y="10" width="2" height="1" fill="#FFFFFF"/><rect x="10" y="10" width="1" height="1" fill="#000000"/><rect x="11" y="10" width="1" height="1" fill="#FFFFFF"/><rect x="12" y="10" width="1" height="1" fill="#0000FF"/><rect x="0" y="11" width="1" height="1" fill="#0000FF"/><rect x="1" y="11" width="4" height="1" fill="#FFFFFF"/><rect x="5" y="11" width="2" height="1" fill="#FF0000"/><rect x="7" y="11" width="1" height="1" fill="#000000"/><rect x="8" y="11" width="2" height="1" fill="#FFFFFF"/><rect x="10" y="11" width="1" height="1" fill="#000000"/><rect x="11" y="11" width="1" height="1" fill="#FFFFFF"/><rect x="12" y="11" width="1" height="1" fill="#0000FF"/><rect x="0" y="12" width="1" height="1" fill="#0000FF"/><rect x="1" y="12" width="3" height="1" fill="#FFFFFF"/><rect x="4" y="12" width="3" height="1" fill="#FF0000"/><rect x="7" y="12" width="3" height="1" fill="#000000"/><rect x="10" y="12" width="2" height="1" fill="#FFFFFF"/><rect x="12" y="12" width="1" height="1" fill="#0000FF"/><rect x="0" y="13" width="1" height="1" fill="#0000FF"/><rect x="1" y="13" width="11" height="1" fill="#FFFFFF"/><rect x="12" y="13" width="1" height="1" fill="#0000FF"/><rect x="0" y="14" width="1" height="1" fill="#0000FF"/><rect x="1" y="14" width="11" height="1" fill="#FFFFFF"/><rect x="12" y="14" width="1" height="1" fill="#0000FF"/><rect x="0" y="15" width="13" height="1" fill="#0000FF"/></svg>
<svg style="left:899px;top:205px" width="15" height="13" viewBox="0 0 15 13" class="px"><rect x="0" y="0" width="6" height="1" fill="#000000"/><rect x="0" y="1" width="1" height="1" fill="#000000"/><rect x="1" y="1" width="4" height="1" fill="#FFFFFF"/><rect x="5" y="1" width="2" height="1" fill="#000000"/><rect x="0" y="2" width="1" height="1" fill="#000000"/><rect x="1" y="2" width="4" height="1" fill="#FFFFFF"/><rect x="5" y="2" width="1" height="1" fill="#000000"/><rect x="6" y="2" width="1" height="1" fill="#FFFFFF"/><rect x="7" y="2" width="1" height="1" fill="#000000"/><rect x="0" y="3" width="1" height="1" fill="#000000"/><rect x="1" y="3" width="1" height="1" fill="#FFFFFF"/><rect x="2" y="3" width="2" height="1" fill="#000000"/><rect x="4" y="3" width="1" height="1" fill="#FFFFFF"/><rect x="5" y="3" width="1" height="1" fill="#000000"/><rect x="6" y="3" width="6" height="1" fill="#000080"/><rect x="0" y="4" width="1" height="1" fill="#000000"/><rect x="1" y="4" width="5" height="1" fill="#FFFFFF"/><rect x="6" y="4" width="1" height="1" fill="#000080"/><rect x="7" y="4" width="4" height="1" fill="#FFFFFF"/><rect x="11" y="4" width="2" height="1" fill="#000080"/><rect x="0" y="5" width="1" height="1" fill="#000000"/><rect x="1" y="5" width="1" height="1" fill="#FFFFFF"/><rect x="2" y="5" width="4" height="1" fill="#000000"/><rect x="6" y="5" width="1" height="1" fill="#000080"/><rect x="7" y="5" width="4" height="1" fill="#FFFFFF"/><rect x="11" y="5" width="1" height="1" fill="#000080"/><rect x="12" y="5" width="1" height="1" fill="#FFFFFF"/><rect x="13" y="5" width="1" height="1" fill="#000080"/><rect x="0" y="6" width="1" height="1" fill="#000000"/><rect x="1" y="6" width="5" height="1" fill="#FFFFFF"/><rect x="6" y="6" width="1" height="1" fill="#000080"/><rect x="7" y="6" width="1" height="1" fill="#FFFFFF"/><rect x="8" y="6" width="2" height="1" fill="#000000"/><rect x="10" y="6" width="1" height="1" fill="#FFFFFF"/><rect x="11" y="6" width="4" height="1" fill="#000080"/><rect x="0" y="7" width="1" height="1" fill="#000000"/><rect x="1" y="7" width="1" height="1" fill="#FFFFFF"/><rect x="2" y="7" width="4" height="1" fill="#000000"/><rect x="6" y="7" width="1" height="1" fill="#000080"/><rect x="7" y="7" width="7" height="1" fill="#FFFFFF"/><rect x="14" y="7" width="1" height="1" fill="#000080"/><rect x="0" y="8" width="1" height="1" fill="#000000"/><rect x="1" y="8" width="5" height="1" fill="#FFFFFF"/><rect x="6" y="8" width="1" height="1" fill="#000080"/><rect x="7" y="8" width="1" height="1" fill="#FFFFFF"/><rect x="8" y="8" width="5" height="1" fill="#000000"/><rect x="13" y="8" width="1" height="1" fill="#FFFFFF"/><rect x="14" y="8" width="1" height="1" fill="#000080"/><rect x="0" y="9" width="6" height="1" fill="#000000"/><rect x="6" y="9" width="1" height="1" fill="#000080"/><rect x="7" y="9" width="7" height="1" fill="#FFFFFF"/><rect x="14" y="9" width="1" height="1" fill="#000080"/><rect x="6" y="10" width="1" height="1" fill="#000080"/><rect x="7" y="10" width="1" height="1" fill="#FFFFFF"/><rect x="8" y="10" width="5" height="1" fill="#000000"/><rect x="13" y="10" width="1" height="1" fill="#FFFFFF"/><rect x="14" y="10" width="1" height="1" fill="#000080"/><rect x="6" y="11" width="1" height="1" fill="#000080"/><rect x="7" y="11" width="7" height="1" fill="#FFFFFF"/><rect x="14" y="11" width="1" height="1" fill="#000080"/><rect x="6" y="12" width="9" height="1" fill="#000080"/></svg>
<svg style="left:927px;top:204px" width="12" height="14" viewBox="0 0 12 14" class="px"><rect x="0" y="0" width="9" height="1" fill="#0000FF"/><rect x="0" y="1" width="1" height="1" fill="#0000FF"/><rect x="1" y="1" width="7" height="1" fill="#FFFFFF"/><rect x="8" y="1" width="2" height="1" fill="#0000FF"/><rect x="0" y="2" width="1" height="1" fill="#0000FF"/><rect x="1" y="2" width="7" height="1" fill="#FFFFFF"/><rect x="8" y="2" width="1" height="1" fill="#0000FF"/><rect x="9" y="2" width="1" height="1" fill="#FFFFFF"/><rect x="10" y="2" width="1" height="1" fill="#0000FF"/><rect x="0" y="3" width="1" height="1" fill="#0000FF"/><rect x="1" y="3" width="1" height="1" fill="#FFFFFF"/><rect x="2" y="3" width="4" height="1" fill="#0000FF"/><rect x="6" y="3" width="2" height="1" fill="#FFFFFF"/><rect x="8" y="3" width="4" height="1" fill="#0000FF"/><rect x="0" y="4" width="1" height="1" fill="#0000FF"/><rect x="1" y="4" width="10" height="1" fill="#FFFFFF"/><rect x="11" y="4" width="1" height="1" fill="#0000FF"/><rect x="0" y="5" width="1" height="1" fill="#0000FF"/><rect x="1" y="5" width="1" height="1" fill="#FFFFFF"/><rect x="2" y="5" width="8" height="1" fill="#0000FF"/><rect x="10" y="5" width="1" height="1" fill="#FFFFFF"/><rect x="11" y="5" width="1" height="1" fill="#0000FF"/><rect x="0" y="6" width="1" height="1" fill="#0000FF"/><rect x="1" y="6" width="10" height="1" fill="#FFFFFF"/><rect x="11" y="6" width="1" height="1" fill="#0000FF"/><rect x="0" y="7" width="1" height="1" fill="#0000FF"/><rect x="1" y="7" width="1" height="1" fill="#FFFFFF"/><rect x="2" y="7" width="8" height="1" fill="#0000FF"/><rect x="10" y="7" width="1" height="1" fill="#FFFFFF"/><rect x="11" y="7" width="1" height="1" fill="#0000FF"/><rect x="0" y="8" width="1" height="1" fill="#0000FF"/><rect x="1" y="8" width="10" height="1" fill="#FFFFFF"/><rect x="11" y="8" width="1" height="1" fill="#0000FF"/><rect x="0" y="9" width="1" height="1" fill="#0000FF"/><rect x="1" y="9" width="1" height="1" fill="#FFFFFF"/><rect x="2" y="9" width="8" height="1" fill="#0000FF"/><rect x="10" y="9" width="1" height="1" fill="#FFFFFF"/><rect x="11" y="9" width="1" height="1" fill="#0000FF"/><rect x="0" y="10" width="1" height="1" fill="#0000FF"/><rect x="1" y="10" width="10" height="1" fill="#FFFFFF"/><rect x="11" y="10" width="1" height="1" fill="#0000FF"/><rect x="0" y="11" width="1" height="1" fill="#0000FF"/><rect x="1" y="11" width="1" height="1" fill="#FFFFFF"/><rect x="2" y="11" width="8" height="1" fill="#0000FF"/><rect x="10" y="11" width="1" height="1" fill="#FFFFFF"/><rect x="11" y="11" width="1" height="1" fill="#0000FF"/><rect x="0" y="12" width="1" height="1" fill="#0000FF"/><rect x="1" y="12" width="10" height="1" fill="#FFFFFF"/><rect x="11" y="12" width="1" height="1" fill="#0000FF"/><rect x="0" y="13" width="12" height="1" fill="#0000FF"/></svg>
<svg style="left:0px;top:0px" width="992" height="780" viewBox="0 0 992 780" ><path d="M926.3,204.5 L939,217.3 M939,204.2 L926.3,217" stroke="#FF0000" stroke-width="2.2" fill="none"/></svg>
<div style="left:12px;top:146px;width:24px;height:23px;border:1px solid #5BA0E8;box-sizing:border-box;background:linear-gradient(#DCEBFC,#C6DFF9);box-shadow:inset 0 0 0 1px #E4F0FC;"></div>
<svg style="left:0px;top:0px" width="992" height="780" viewBox="0 0 992 780" ><path d="M19.5,150.5 V163 L22.4,160.3 L24.8,165.4 L26.9,164.4 L24.6,159.5 H28.3 Z" fill="#fff" stroke="#000" stroke-width="1.1" stroke-linejoin="miter"/></svg>
<svg style="left:0px;top:0px" width="992" height="780" viewBox="0 0 992 780" ><path d="M18.2,189.3 L30.3,177.2" stroke="#0000FF" stroke-width="1.4"/></svg>
<svg style="left:0px;top:0px" width="992" height="780" viewBox="0 0 992 780" ><circle cx="25" cy="208" r="3" fill="#909090"/><circle cx="24.2" cy="207.1" r="3.1" fill="#0000FF"/></svg>
<svg style="left:0px;top:0px" width="992" height="780" viewBox="0 0 992 780" class="px"><rect x="16" y="226" width="1" height="13" fill="#0000FF"/><rect x="31" y="226" width="1" height="13" fill="#0000FF"/><rect x="15" y="236" width="8" height="1" fill="#0000FF"/><rect x="26" y="236" width="8" height="1" fill="#0000FF"/><rect x="17" y="235" width="2" height="3" fill="#0000FF"/><rect x="29" y="235" width="2" height="3" fill="#0000FF"/><rect x="23" y="234" width="1.4" height="5" fill="#000"/><rect x="23" y="238" width="3" height="1" fill="#000"/></svg>
<svg style="left:15px;top:252px" width="18" height="12" viewBox="0 0 18 12" class="px"><rect x="0" y="0" width="1" height="1" fill="#FFFFFF"/><rect x="1" y="0" width="1" height="1" fill="#000000"/><rect x="2" y="0" width="1" height="1" fill="#FFFFFF"/><rect x="3" y="0" width="1" height="1" fill="#000000"/><rect x="4" y="0" width="1" height="1" fill="#FFFFFF"/><rect x="5" y="0" width="1" height="1" fill="#000000"/><rect x="6" y="0" width="1" height="1" fill="#FFFFFF"/><rect x="7" y="0" width="1" height="1" fill="#000000"/><rect x="8" y="0" width="1" height="1" fill="#FFFFFF"/><rect x="9" y="0" width="1" height="1" fill="#000000"/><rect x="10" y="0" width="1" height="1" fill="#FFFFFF"/><rect x="11" y="0" width="1" height="1" fill="#000000"/><rect x="12" y="0" width="1" height="1" fill="#FFFFFF"/><rect x="13" y="0" width="1" height="1" fill="#000000"/><rect x="14" y="0" width="1" height="1" fill="#FFFFFF"/><rect x="15" y="0" width="1" height="1" fill="#000000"/><rect x="16" y="0" width="1" height="1" fill="#FFFFFF"/><rect x="17" y="0" width="1" height="1" fill="#000000"/><rect x="0" y="1" width="18" height="1" fill="#000000"/><rect x="0" y="2" width="18" height="1" fill="#000000"/><rect x="0" y="3" width="4" height="1" fill="#FFFFFF"/><rect x="4" y="3" width="1" height="1" fill="#000000"/><rect x="5" y="3" width="2" height="1" fill="#FFFFFF"/><rect x="7" y="3" width="1" height="1" fill="#000000"/><rect x="8" y="3" width="2" height="1" fill="#FFFFFF"/><rect x="10" y="3" width="1" height="1" fill="#000000"/><rect x="11" y="3" width="2" height="1" fill="#FFFFFF"/><rect x="13" y="3" width="1" height="1" fill="#000000"/><rect x="14" y="3" width="2" height="1" fill="#FFFFFF"/><rect x="16" y="3" width="2" height="1" fill="#000000"/><rect x="0" y="4" width="4" height="1" fill="#FFFFFF"/><rect x="4" y="4" width="1" height="1" fill="#000000"/><rect x="5" y="4" width="2" height="1" fill="#FFFFFF"/><rect x="7" y="4" width="1" height="1" fill="#000000"/><rect x="8" y="4" width="2" height="1" fill="#FFFFFF"/><rect x="10" y="4" width="1" height="1" fill="#000000"/><rect x="11" y="4" width="2" height="1" fill="#FFFFFF"/><rect x="13" y="4" width="1" height="1" fill="#000000"/><rect x="14" y="4" width="2" height="1" fill="#FFFFFF"/><rect x="16" y="4" width="2" height="1" fill="#000000"/><rect x="0" y="5" width="18" height="1" fill="#000000"/><rect x="0" y="6" width="2" height="1" fill="#FFFFFF"/><rect x="2" y="6" width="1" height="1" fill="#000000"/><rect x="3" y="6" width="2" height="1" fill="#FFFFFF"/><rect x="5" y="6" width="1" height="1" fill="#000000"/><rect x="6" y="6" width="2" height="1" fill="#FFFFFF"/><rect x="8" y="6" width="1" height="1" fill="#000000"/><rect x="9" y="6" width="2" height="1" fill="#FFFFFF"/><rect x="11" y="6" width="1" height="1" fill="#000000"/><rect x="12" y="6" width="2" height="1" fill="#FFFFFF"/><rect x="14" y="6" width="1" height="1" fill="#000000"/><rect x="15" y="6" width="2" height="1" fill="#FFFFFF"/><rect x="17" y="6" width="1" height="1" fill="#000000"/><rect x="0" y="7" width="2" height="1" fill="#FFFFFF"/><rect x="2" y="7" width="1" height="1" fill="#000000"/><rect x="3" y="7" width="2" height="1" fill="#FFFFFF"/><rect x="5" y="7" width="1" height="1" fill="#000000"/><rect x="6" y="7" width="2" height="1" fill="#FFFFFF"/><rect x="8" y="7" width="1" height="1" fill="#000000"/><rect x="9" y="7" width="2" height="1" fill="#FFFFFF"/><rect x="11" y="7" width="1" height="1" fill="#000000"/><rect x="12" y="7" width="2" height="1" fill="#FFFFFF"/><rect x="14" y="7" width="1" height="1" fill="#000000"/><rect x="15" y="7" width="2" height="1" fill="#FFFFFF"/><rect x="17" y="7" width="1" height="1" fill="#000000"/><rect x="0" y="8" width="18" height="1" fill="#000000"/><rect x="0" y="9" width="16" height="1" fill="#FFFFFF"/><rect x="16" y="9" width="2" height="1" fill="#000000"/><rect x="0" y="10" width="16" height="1" fill="#FFFFFF"/><rect x="16" y="10" width="2" height="1" fill="#000000"/><rect x="0" y="11" width="18" height="1" fill="#000000"/></svg>
<svg style="left:0px;top:0px" width="992" height="780" viewBox="0 0 992 780" ><path d="M17.8,276.6 L29.3,288.4" stroke="#808080" stroke-width="1.6" stroke-linecap="round"/><path d="M29.5,276.5 L18,287.8" stroke="#808080" stroke-width="2.4" stroke-linecap="round"/></svg>
<div style="left:11px;top:300px;width:25px;height:1px;background:#A0A0A0;"></div>
<div style="left:11px;top:301px;width:25px;height:1px;background:#fff;"></div>
<svg style="left:0px;top:0px" width="992" height="780" viewBox="0 0 992 780" ><circle cx="19.5" cy="315.4" r="4.3" fill="none" stroke="#0000FF" stroke-width="1.2" stroke-dasharray="1.1,1.6"/><circle cx="28.7" cy="323.3" r="3.7" fill="none" stroke="#1C1CC8" stroke-width="2" stroke-dasharray="2.2,0.8"/><path d="M19.8,315.8 L27,322.2" stroke="#000" stroke-width="1.1"/><path d="M28.6,323.6 L25,322.9 L27.9,320 Z" fill="#000"/></svg>
<svg style="left:0px;top:0px" width="992" height="780" viewBox="0 0 992 780" ><rect x="16.5" y="564.5" width="15" height="11" fill="#808080" stroke="#000" stroke-width="1.2"/><rect x="18" y="566" width="12" height="8" fill="#fff"/><rect x="18" y="571.5" width="12" height="2.5" fill="#0000FF"/><path d="M21.7,571.6 A2.4,2.4 0 0 1 26.5,571.6 Z" fill="#FF0000"/><path d="M24.1,567.5 V569 M20.2,568.6 L21.6,570 M28,568.6 L26.6,570" stroke="#FFE000" stroke-width="1"/><rect x="23" y="576" width="3" height="2" fill="#000"/><rect x="20" y="578" width="9" height="1" fill="#000"/></svg>
<svg style="left:0px;top:0px" width="992" height="780" viewBox="0 0 992 780" ><circle cx="23.6" cy="596.5" r="7.7" fill="#0000FF"/><path d="M17.8,592 L20.5,589.6 L24.5,589.3 L25.6,591 L24.3,593.2 L22.3,593.6 L23.2,595.8 L26.3,597.4 L27.4,599.4 L25.6,601.6 L24.8,604 L23.4,604 L22.6,600.3 L20.3,598.2 L19.8,595 L18,594.2 Z" fill="#00E000"/><path d="M28.3,591.6 L30.4,593.6 L30.9,597.3 L29.6,598.5 L28.6,596.3 L28.9,593.6 Z" fill="#00E000"/></svg>
<svg style="left:0px;top:0px" width="992" height="780" viewBox="0 0 992 780" ><circle cx="22.3" cy="620.3" r="5.2" fill="none" stroke="#000" stroke-width="1.2"/><path d="M26.2,624.3 L30.6,628.5" stroke="#000" stroke-width="2.1" stroke-linecap="round"/><path d="M20.3,622.9 Q22.3,624.3 24.6,622.5" stroke="#A0A0A0" stroke-width="0.9" fill="none"/><circle cx="22.3" cy="645.4" r="5.2" fill="none" stroke="#000" stroke-width="1.2"/><path d="M26.2,649.4 L30.6,653.6" stroke="#000" stroke-width="2.1" stroke-linecap="round"/><path d="M20.3,648.0 Q22.3,649.4 24.6,647.6" stroke="#A0A0A0" stroke-width="0.9" fill="none"/><rect x="19" y="644.4" width="7" height="2" fill="#000"/><rect x="21.4" y="641.9" width="2" height="7" fill="#000"/><circle cx="22.3" cy="670.0" r="5.2" fill="none" stroke="#000" stroke-width="1.2"/><path d="M26.2,674.0 L30.6,678.2" stroke="#000" stroke-width="2.1" stroke-linecap="round"/><path d="M20.3,672.6 Q22.3,674.0 24.6,672.2" stroke="#A0A0A0" stroke-width="0.9" fill="none"/><rect x="19" y="669.0" width="7" height="2" fill="#000"/></svg>
<div style="left:16px;top:692px;width:17px;height:71px;background:#909090;"></div>
<div style="left:15px;top:691px;width:17px;height:71px;background:linear-gradient(to bottom,#1E1E1E 0px,#2A2A2A 3px,#fff 3px,#fff 4px,#686868 4px,#808080 8px,#8C8C8C 12px,#606060 12.5px,#606060 13.5px,#fff 13.5px,#fff 14.5px,#A6A6A6 14.5px,#B0B0B0 20px,#C6C6C6 20px,#CACACA 25.5px,#707070 25.5px,#707070 26.5px,#fff 26.5px,#fff 27.5px,#E2E2E2 27.5px,#E4E4E4 32px,#FAFAFA 32px,#FAFAFA 37px,#E2E2E2 37px,#E0E0E0 42.5px,#707070 42.5px,#707070 43.5px,#fff 43.5px,#fff 44.5px,#C4C4C4 44.5px,#C0C0C0 48px,#ABABAB 48px,#A8A8A8 53px,#909090 53px,#8C8C8C 57.5px,#fff 57.5px,#fff 58.5px,#848484 58.5px,#787878 62px,#646464 62px,#5C5C5C 67.5px,#fff 67.5px,#fff 68.5px,#202020 68.5px,#101010 71px);"></div>
<svg style="left:0px;top:0px" width="992" height="780" viewBox="0 0 992 780" ><defs><linearGradient id="tg" x1="0" x2="1"><stop offset="0" stop-color="#555"/><stop offset="0.45" stop-color="#C4C4C4"/><stop offset="1" stop-color="#4C4C4C"/></linearGradient><linearGradient id="tv" x1="0" x2="0" y1="0" y2="1"><stop offset="0" stop-color="#8E8E8E"/><stop offset="0.4" stop-color="#BDBDBD"/><stop offset="0.75" stop-color="#7A7A7A"/><stop offset="1" stop-color="#3C3C3C"/></linearGradient></defs><rect x="10" y="7" width="16" height="4" fill="url(#tv)"/><rect x="12" y="11" width="4" height="10" fill="url(#tg)"/><rect x="20.4" y="11" width="4" height="10" fill="url(#tg)"/><path d="M10,23 V21.8 L11.8,20.4 H16.2 L17,21.8 V23 Z M19.2,23 V21.8 L20.2,20.4 H24.6 L26,21.8 V23 Z" fill="#3E3E3E"/></svg>
<div class="t" style="font-size:15px;color:#1C1C1C;top:23.3px;left:310.74px;transform-origin:0 0;transform:scaleX(1.0103) translateY(-100%)">Ftool - Two-Dimensional Frame Analysis Tool: bridge.ftl</div>
<div class="t" style="font-size:12px;color:#000;top:46.84px;left:14.5px;transform-origin:0 0;transform:translateY(-100%)">File</div>
<div class="t" style="font-size:12px;color:#000;top:46.84px;left:46.99px;transform-origin:0 0;transform:scaleX(1.0247) translateY(-100%)">Options</div>
<div class="t" style="font-size:12px;color:#000;top:46.84px;left:102.01px;transform-origin:0 0;transform:scaleX(0.9870) translateY(-100%)">Display</div>
<div class="t" style="font-size:12px;color:#000;top:72.84px;left:481.5px;transform-origin:0 0;transform:scaleX(1.0038) translateY(-100%)">Load Case/Combination:</div>
<div class="t" style="font-size:12px;color:#6D6D6D;top:72.84px;left:619.54px;transform-origin:0 0;transform:scaleX(0.9624) translateY(-100%)">NONE</div>
<div class="t" style="font-size:12px;color:#000;top:72.84px;left:778.51px;transform-origin:0 0;transform:scaleX(0.9914) translateY(-100%)">Load Train:</div>
<div class="t" style="font-size:12px;color:#000;top:72.84px;left:844.52px;transform-origin:0 0;transform:scaleX(0.9531) translateY(-100%)">Cooper-E80</div>
<div class="t" style="font-size:12px;color:#000;top:102.84px;left:455.48px;transform-origin:0 0;transform:scaleX(1.0210) translateY(-100%)">Editing Mode:</div>
<div class="t" style="font-size:12px;color:#6D6D6D;top:102.84px;left:543.01px;transform-origin:0 0;transform:scaleX(0.9741) translateY(-100%)">Selection</div>
<div class="t" style="font-size:12px;color:#000;top:132.84px;left:781.52px;transform-origin:0 0;transform:scaleX(0.9623) translateY(-100%)">Step:</div>
<div class="t" style="font-size:12px;color:#000;top:132.84px;left:837.31px;transform-origin:0 0;transform:scaleX(0.9350) translateY(-100%)">0.0</div>
<div class="t" style="font-size:12px;color:#000;top:132.84px;left:854.62px;transform-origin:0 0;transform:scaleX(1.1765) translateY(-100%)">m</div>
<div class="t" style="font-size:12px;color:#000;top:161.84px;font-weight:bold;left:851.8px;transform-origin:0 0;transform:scaleX(0.9283) translateY(-100%)">Load Train</div>
<div class="t" style="font-size:12px;color:#000;top:184.84px;left:814.02px;transform-origin:0 0;transform:scaleX(0.9578) translateY(-100%)">Cooper-E80</div>
<div class="t" style="font-size:12px;color:#000;top:248.84px;left:782.27px;transform-origin:0 0;transform:scaleX(1.0346) translateY(-100%)">Impact factor:</div>
<div class="t" style="font-size:12px;color:#000;top:248.84px;left:871.86px;transform-origin:0 0;transform:scaleX(0.8539) translateY(-100%)">1.00</div>
<div class="t" style="font-size:12px;color:#000;top:275.84px;left:782.27px;transform-origin:0 0;transform:scaleX(1.0316) translateY(-100%)">Length:</div>
<div class="t" style="font-size:12px;color:#000;top:275.84px;left:840.43px;transform-origin:0 0;transform:scaleX(0.8897) translateY(-100%)">120.0</div>
<div class="t" style="font-size:12px;color:#000;top:275.84px;left:871.75px;transform-origin:0 0;transform:scaleX(1.1294) translateY(-100%)">m</div>
<div class="t" style="font-size:12px;color:#000;top:299.84px;left:782.8px;transform-origin:0 0;transform:scaleX(0.9915) translateY(-100%)">Concentrated loads:</div>
<div class="t" style="font-size:12px;color:#000;top:321.84px;left:844.7px;transform-origin:0 0;transform:scaleX(1.1000) translateY(-100%)">x[m]</div>
<div class="t" style="font-size:12px;color:#000;top:321.84px;left:888.03px;transform-origin:0 0;transform:scaleX(1.0655) translateY(-100%)">P[kN]</div>
<div class="t" style="font-size:12px;color:#000;top:341.84px;left:823.75px;transform-origin:0 0;transform:translateY(-100%)">1</div>
<div class="t" style="font-size:12px;color:#000;top:341.84px;left:858.81px;transform-origin:0 0;transform:scaleX(0.9350) translateY(-100%)">0.0</div>
<div class="t" style="font-size:12px;color:#000;top:341.84px;left:900.96px;transform-origin:0 0;transform:scaleX(0.9700) translateY(-100%)">-180</div>
<div class="t" style="font-size:12px;color:#000;top:360.84px;left:824.02px;transform-origin:0 0;transform:scaleX(0.9565) translateY(-100%)">2</div>
<div class="t" style="font-size:12px;color:#000;top:360.84px;left:858.81px;transform-origin:0 0;transform:scaleX(0.9350) translateY(-100%)">2.0</div>
<div class="t" style="font-size:12px;color:#000;top:360.84px;left:900.96px;transform-origin:0 0;transform:scaleX(0.9700) translateY(-100%)">-360</div>
<div class="t" style="font-size:12px;color:#000;top:379.84px;left:824.02px;transform-origin:0 0;transform:scaleX(0.9565) translateY(-100%)">3</div>
<div class="t" style="font-size:12px;color:#000;top:379.84px;left:858.81px;transform-origin:0 0;transform:scaleX(0.9350) translateY(-100%)">4.0</div>
<div class="t" style="font-size:12px;color:#000;top:379.84px;left:900.96px;transform-origin:0 0;transform:scaleX(0.9700) translateY(-100%)">-360</div>
<div class="t" style="font-size:12px;color:#000;top:398.84px;left:824.28px;transform-origin:0 0;transform:scaleX(0.8800) translateY(-100%)">4</div>
<div class="t" style="font-size:12px;color:#000;top:398.84px;left:858.81px;transform-origin:0 0;transform:scaleX(0.9350) translateY(-100%)">5.0</div>
<div class="t" style="font-size:12px;color:#000;top:398.84px;left:900.96px;transform-origin:0 0;transform:scaleX(0.9700) translateY(-100%)">-360</div>
<div class="t" style="font-size:12px;color:#000;top:417.84px;left:824.02px;transform-origin:0 0;transform:scaleX(0.9565) translateY(-100%)">5</div>
<div class="t" style="font-size:12px;color:#000;top:417.84px;left:858.81px;transform-origin:0 0;transform:scaleX(0.9350) translateY(-100%)">7.0</div>
<div class="t" style="font-size:12px;color:#000;top:417.84px;left:900.96px;transform-origin:0 0;transform:scaleX(0.9700) translateY(-100%)">-360</div>
<div class="t" style="font-size:12px;color:#000;top:440.84px;left:782.27px;transform-origin:0 0;transform:scaleX(1.0299) translateY(-100%)">Distrib. loads [kN/m]:</div>
<div class="t" style="font-size:12px;color:#000;top:457.84px;left:798.51px;transform-origin:0 0;transform:scaleX(0.9870) translateY(-100%)">Single load car (q)</div>
<div class="t" style="font-size:12px;color:#000;top:473.84px;left:797.95px;transform-origin:0 0;transform:scaleX(1.0519) translateY(-100%)">Full/empty car (q/q')</div>
<div class="t" style="font-size:12px;color:#000;top:496.84px;left:828.0px;transform-origin:0 0;transform:scaleX(0.8392) translateY(-100%)">xa</div>
<div class="t" style="font-size:12px;color:#000;top:496.84px;left:866.3px;transform-origin:0 0;transform:scaleX(0.8898) translateY(-100%)">xb</div>
<div class="t" style="font-size:12px;color:#000;top:496.84px;left:906.2px;transform-origin:0 0;transform:translateY(-100%)">q</div>
<div class="t" style="font-size:12px;color:#000;top:496.84px;left:943.35px;transform-origin:0 0;transform:scaleX(1.1000) translateY(-100%)">q'</div>
<div class="t" style="font-size:12px;color:#000;top:516.84px;left:803.48px;transform-origin:0 0;transform:scaleX(0.9636) translateY(-100%)">1</div>
<div class="t" style="font-size:12px;color:#000;top:535.84px;left:803.74px;transform-origin:0 0;transform:scaleX(0.9217) translateY(-100%)">2</div>
<div class="t" style="font-size:12px;color:#000;top:554.84px;left:803.74px;transform-origin:0 0;transform:scaleX(0.9217) translateY(-100%)">3</div>
<div class="t" style="font-size:12px;color:#000;top:516.84px;left:826.6px;transform-origin:0 0;transform:scaleX(0.9350) translateY(-100%)">16.0</div>
<div class="t" style="font-size:12px;color:#000;top:516.84px;left:858.38px;transform-origin:0 0;transform:scaleX(0.9350) translateY(-100%)">120.0</div>
<div class="t" style="font-size:12px;color:#000;top:516.84px;left:897.91px;transform-origin:0 0;transform:scaleX(0.9700) translateY(-100%)">-12.0</div>
<div class="t" style="font-size:12px;color:#000;top:516.84px;left:936.86px;transform-origin:0 0;transform:scaleX(0.9700) translateY(-100%)">-2.0</div>
<div class="t" style="font-size:12px;color:#000;top:577.84px;left:782.26px;transform-origin:0 0;transform:scaleX(1.0377) translateY(-100%)">Live load [kN/m]:</div>
<div class="t" style="font-size:12px;color:#000;top:596.84px;left:833.65px;transform-origin:0 0;transform:scaleX(0.9466) translateY(-100%)">Exterior</div>
<div class="t" style="font-size:12px;color:#000;top:615.84px;left:833.15px;transform-origin:0 0;transform:scaleX(1.0455) translateY(-100%)">Interior</div>
<div class="t" style="font-size:12px;color:#000;top:596.84px;left:911.81px;transform-origin:0 0;transform:scaleX(0.9350) translateY(-100%)">0.0</div>
<div class="t" style="font-size:12px;color:#000;top:615.84px;left:911.81px;transform-origin:0 0;transform:scaleX(0.9350) translateY(-100%)">0.0</div>
<div class="t" style="font-size:12px;color:#000;top:764.84px;left:42.91px;transform-origin:0 0;transform:scaleX(1.1900) translateY(-100%)">H:</div>
<div class="t" style="font-size:12px;color:#000;top:764.84px;left:76.54px;transform-origin:0 0;transform:scaleX(0.8828) translateY(-100%)">159.6</div>
<div class="t" style="font-size:12px;color:#000;top:764.84px;left:107.55px;transform-origin:0 0;transform:scaleX(1.1294) translateY(-100%)">m</div>
<div class="t" style="font-size:12px;color:#000;top:764.84px;left:134.3px;transform-origin:0 0;transform:scaleX(0.9300) translateY(-100%)">V:</div>
<div class="t" style="font-size:12px;color:#000;top:764.84px;left:164.53px;transform-origin:0 0;transform:scaleX(0.8904) translateY(-100%)">130.1</div>
<div class="t" style="font-size:12px;color:#000;top:764.84px;left:195.71px;transform-origin:0 0;transform:scaleX(1.1882) translateY(-100%)">m</div>
<div class="t" style="font-size:12px;color:#000;top:765.84px;left:235.27px;transform-origin:0 0;transform:scaleX(0.9300) translateY(-100%)">X:</div>
<div class="t" style="font-size:12px;color:#000;top:765.84px;left:316.26px;transform-origin:0 0;transform:scaleX(0.9789) translateY(-100%)">Y:</div>
<div class="t" style="font-size:12px;color:#000;top:764.84px;left:510.72px;transform-origin:0 0;transform:scaleX(0.9628) translateY(-100%)">Grid</div>
<div class="t" style="font-size:12px;color:#000;top:764.84px;left:548.5px;transform-origin:0 0;transform:translateY(-100%)">X:</div>
<div class="t" style="font-size:12px;color:#6D6D6D;top:764.84px;left:591.32px;transform-origin:0 0;transform:scaleX(0.9032) translateY(-100%)">1.0</div>
<div class="t" style="font-size:12px;color:#000;top:764.84px;left:610.75px;transform-origin:0 0;transform:scaleX(1.1294) translateY(-100%)">m</div>
<div class="t" style="font-size:12px;color:#000;top:764.84px;left:637.37px;transform-origin:0 0;transform:scaleX(0.9368) translateY(-100%)">Y:</div>
<div class="t" style="font-size:12px;color:#6D6D6D;top:764.84px;left:679.64px;transform-origin:0 0;transform:scaleX(0.8839) translateY(-100%)">1.0</div>
<div class="t" style="font-size:12px;color:#000;top:764.84px;left:698.49px;transform-origin:0 0;transform:scaleX(1.2118) translateY(-100%)">m</div>
<div class="t" style="font-size:12px;color:#838383;top:764.84px;left:741.45px;transform-origin:0 0;transform:scaleX(0.8936) translateY(-100%)">Snap</div>
<div class="t" style="font-size:10px;color:#000080;top:97.53px;-webkit-text-stroke:0.35px #000080;left:323.16px;transform-origin:0 0;transform:scaleX(0.8571) translateY(-100%)">Load</div>
<div class="t" style="font-size:10px;color:#000080;top:106.53px;-webkit-text-stroke:0.35px #000080;left:323.4px;transform-origin:0 0;transform:scaleX(0.8000) translateY(-100%)">Case</div>
<div class="t" style="font-size:10px;color:#000080;top:97.53px;-webkit-text-stroke:0.35px #000080;left:349.36px;transform-origin:0 0;transform:scaleX(0.8571) translateY(-100%)">Load</div>
<div class="t" style="font-size:10px;color:#000080;top:106.53px;-webkit-text-stroke:0.35px #000080;left:349.58px;transform-origin:0 0;transform:scaleX(0.8395) translateY(-100%)">Cmb</div>
<div class="t" style="font-size:10px;color:#000080;top:97.53px;-webkit-text-stroke:0.35px #000080;left:399.15px;transform-origin:0 0;transform:scaleX(0.8667) translateY(-100%)">Load</div>
<div class="t" style="font-size:10px;color:#000080;top:106.53px;-webkit-text-stroke:0.35px #000080;left:399.8px;transform-origin:0 0;transform:scaleX(0.8273) translateY(-100%)">Train</div>
<div class="t" style="font-size:6.5px;color:#000;top:107.0px;font-weight:bold;left:819.74px;transform-origin:0 0;transform:scaleX(1.0222) translateY(-100%)">CB</div>
<div class="t" style="font-size:9px;color:#000;top:97.38px;left:960.78px;transform-origin:0 0;transform:scaleX(0.8727) translateY(-100%)">S</div>
</body></html>
